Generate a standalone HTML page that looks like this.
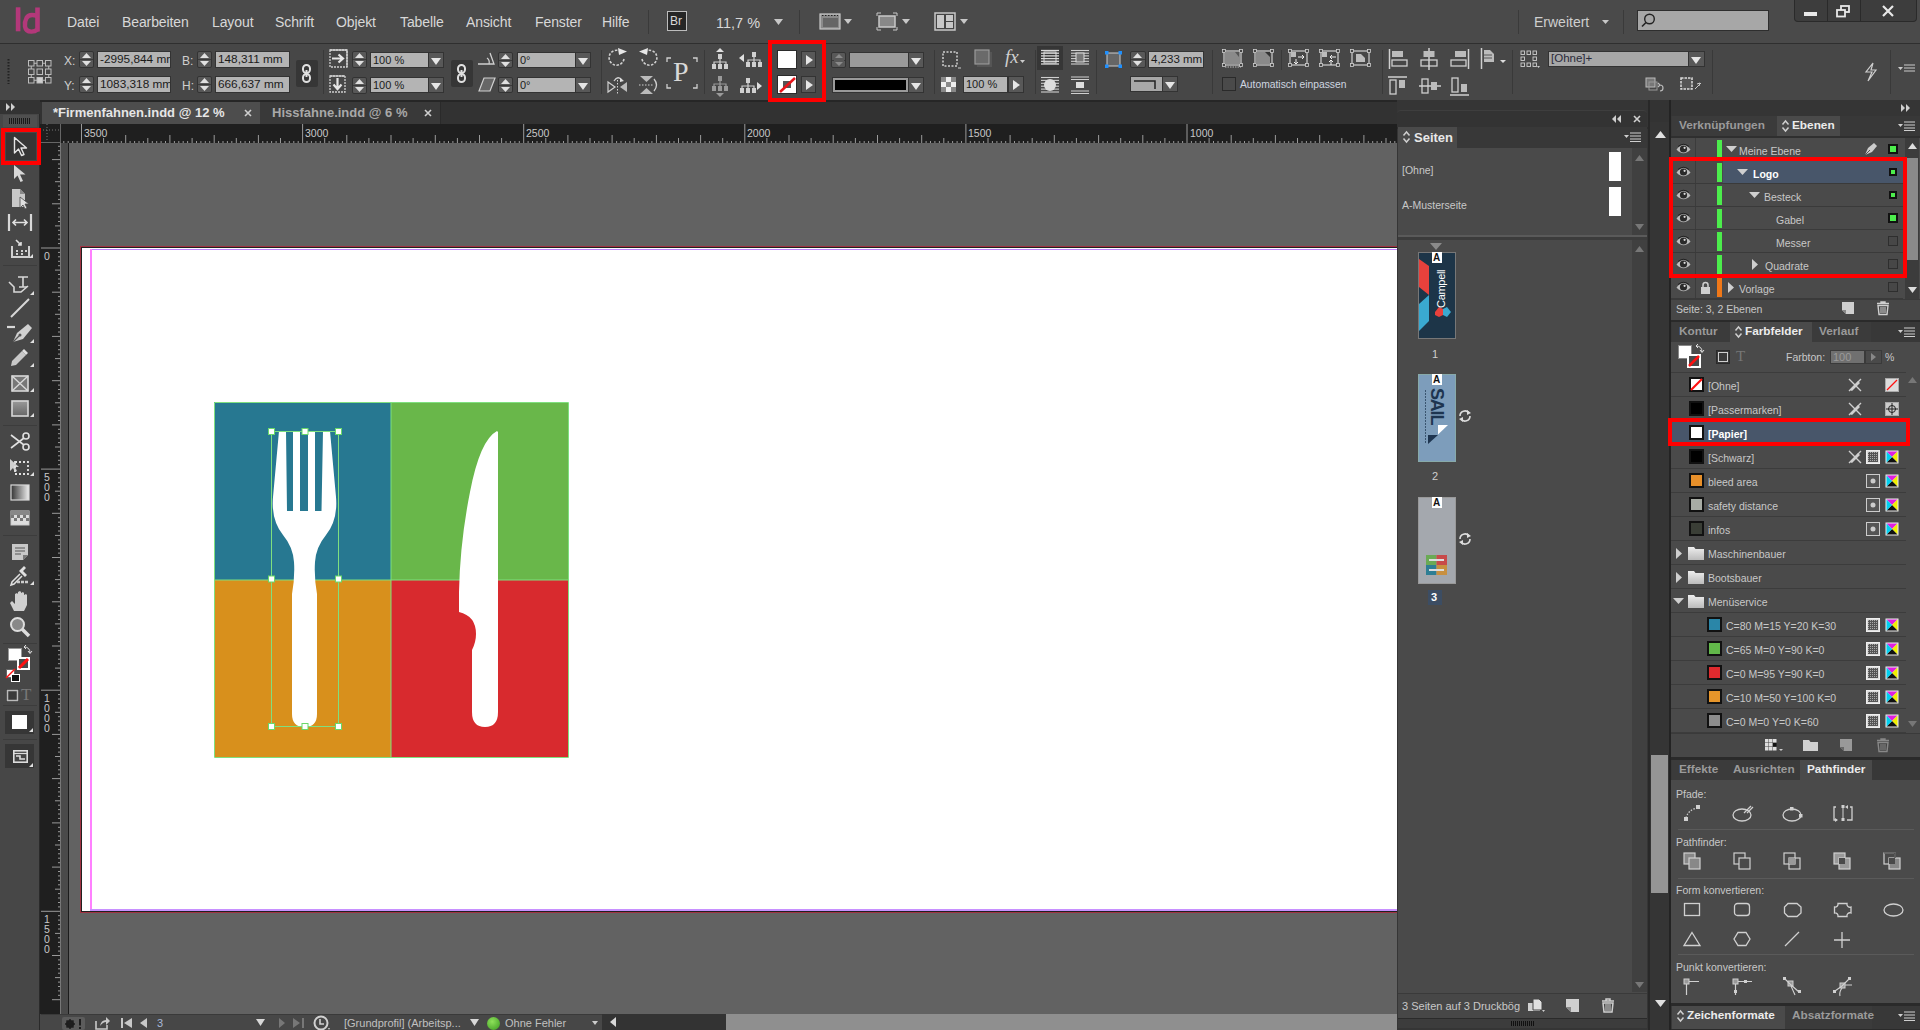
<!DOCTYPE html><html><head><meta charset="utf-8"><style>
*{margin:0;padding:0;box-sizing:border-box}
html,body{width:1920px;height:1030px;overflow:hidden;background:#4a4a4a;font-family:"Liberation Sans",sans-serif;color:#d0d0d0}
.a{position:absolute}
.t{position:absolute;white-space:nowrap;line-height:1}
svg{position:absolute;overflow:visible}
</style></head><body><div class="a" style="left:0px;top:0px;width:1920px;height:43px;background:#4a4a4a"></div><div class="a" style="left:0px;top:43px;width:1920px;height:59px;background:#474747;border-top:1px solid #2f2f2f;border-bottom:2px solid #262626"></div><div class="a" style="left:0px;top:102px;width:1920px;height:22px;background:#323232"></div><div class="a" style="left:0px;top:100px;width:40px;height:930px;background:#474747;border-right:1px solid #2a2a2a"></div><div class="a" style="left:40px;top:124px;width:1357px;height:19px;background:#1f1f1f"></div><div class="a" style="left:40px;top:124px;width:21px;height:890px;background:#1f1f1f"></div><div class="a" style="left:61px;top:143px;width:1336px;height:871px;background:#626262"></div><div class="a" style="left:61px;top:143px;width:7px;height:871px;background:#4a4a4a"></div><div class="a" style="left:68px;top:143px;width:1px;height:871px;background:#1c1c1c"></div><div class="a" style="left:80px;top:246px;width:1317px;height:667px;background:#a03242"></div><div class="a" style="left:81px;top:247px;width:1316px;height:665px;background:#202020"></div><div class="a" style="left:82px;top:248px;width:1315px;height:663px;background:#ffffff"></div><div class="a" style="left:40px;top:1014px;width:1357px;height:16px;background:#474747"></div><div class="a" style="left:726px;top:1014px;width:671px;height:16px;background:#8f8f8f"></div><div class="a" style="left:1397px;top:100px;width:253px;height:930px;background:#383838"></div><div class="a" style="left:1398px;top:127px;width:249px;height:866px;background:#4a4a4a"></div><div class="a" style="left:1650px;top:100px;width:20px;height:930px;background:#333333"></div><div class="a" style="left:1651px;top:755px;width:17px;height:138px;background:#8c8c8c"></div><div class="a" style="left:1670px;top:100px;width:250px;height:930px;background:#3a3a3a"></div><svg style="left:14px;top:6px;" width="28" height="27" viewBox="0 0 28 27"><rect x="1.8" y="1.3" width="4.6" height="24" fill="#b3387a"/><rect x="21.2" y="1.5" width="4.6" height="24" fill="#b3387a"/><path d="M23.5 10.2Q15.5 7 12.5 12Q10.3 16 11 20.5Q12 25.8 17.5 25.6Q21 25.5 23.5 23.5" fill="none" stroke="#b3387a" stroke-width="4.4"/></svg><div class="t" style="left:67px;top:15px;font-size:14px;color:#d8d8d8;letter-spacing:-0.1px">Datei</div><div class="t" style="left:122px;top:15px;font-size:14px;color:#d8d8d8;letter-spacing:-0.1px">Bearbeiten</div><div class="t" style="left:212px;top:15px;font-size:14px;color:#d8d8d8;letter-spacing:-0.1px">Layout</div><div class="t" style="left:275px;top:15px;font-size:14px;color:#d8d8d8;letter-spacing:-0.1px">Schrift</div><div class="t" style="left:336px;top:15px;font-size:14px;color:#d8d8d8;letter-spacing:-0.1px">Objekt</div><div class="t" style="left:400px;top:15px;font-size:14px;color:#d8d8d8;letter-spacing:-0.1px">Tabelle</div><div class="t" style="left:466px;top:15px;font-size:14px;color:#d8d8d8;letter-spacing:-0.1px">Ansicht</div><div class="t" style="left:535px;top:15px;font-size:14px;color:#d8d8d8;letter-spacing:-0.1px">Fenster</div><div class="t" style="left:602px;top:15px;font-size:14px;color:#d8d8d8;letter-spacing:-0.1px">Hilfe</div><div class="a" style="left:648px;top:10px;width:1px;height:24px;background:#3a3a3a"></div><div class="a" style="left:667px;top:11px;width:20px;height:20px;border:1px solid #bdbdbd;background:#262626"></div><div class="t" style="left:670px;top:15px;font-size:12px;color:#d8d8d8;">Br</div><div class="t" style="left:716px;top:16px;font-size:14.5px;color:#d8d8d8;">11,7 %</div><svg style="left:774px;top:19px;" width="9" height="6" viewBox="0 0 9 6"><path d="M0 0H9L4.5 6Z" fill="#c8c8c8"/></svg><div class="a" style="left:799px;top:10px;width:1px;height:24px;background:#3a3a3a"></div><svg style="left:819px;top:12px;" width="22" height="19" viewBox="0 0 22 19"><rect x="1" y="2" width="20" height="15" fill="#8a8a8a" stroke="#c8c8c8" stroke-width="1.2"/><rect x="4" y="6" width="15" height="9" fill="#666"/><path d="M3 3.5h16" stroke="#222" stroke-dasharray="1.5 1.5"/></svg><svg style="left:844px;top:19px;" width="8" height="5" viewBox="0 0 8 5"><path d="M0 0H8L4 5Z" fill="#c8c8c8"/></svg><svg style="left:876px;top:12px;" width="22" height="19" viewBox="0 0 22 19"><rect x="3" y="4" width="16" height="11" fill="#888" stroke="#c8c8c8" stroke-width="1.5"/><path d="M1 4V1H5M17 1H21V4M21 15V18H17M5 18H1V15" stroke="#c8c8c8" fill="none"/></svg><svg style="left:902px;top:19px;" width="8" height="5" viewBox="0 0 8 5"><path d="M0 0H8L4 5Z" fill="#c8c8c8"/></svg><svg style="left:934px;top:12px;" width="22" height="19" viewBox="0 0 22 19"><rect x="1" y="1" width="20" height="17" fill="#444" stroke="#c8c8c8" stroke-width="1.5"/><rect x="3" y="3" width="7" height="13" fill="#c8c8c8"/><rect x="12" y="3" width="7" height="6" fill="#c8c8c8"/><rect x="12" y="10" width="7" height="6" fill="#c8c8c8"/></svg><svg style="left:960px;top:19px;" width="8" height="5" viewBox="0 0 8 5"><path d="M0 0H8L4 5Z" fill="#c8c8c8"/></svg><div class="a" style="left:1518px;top:10px;width:1px;height:24px;background:#3a3a3a"></div><div class="t" style="left:1534px;top:15px;font-size:14px;color:#cfcfcf;">Erweitert</div><svg style="left:1602px;top:20px;" width="7" height="4" viewBox="0 0 7 4"><path d="M0 0H7L3.5 4Z" fill="#c8c8c8"/></svg><div class="a" style="left:1623px;top:10px;width:1px;height:24px;background:#3a3a3a"></div><div class="a" style="left:1637px;top:10px;width:132px;height:21px;background:#a7a7a7;border:1px solid #2e2e2e"></div><svg style="left:1641px;top:13px;" width="14" height="15" viewBox="0 0 14 15"><circle cx="8.5" cy="6" r="4.8" fill="none" stroke="#222" stroke-width="1.4"/><path d="M5 9.5L1 13.5" stroke="#222" stroke-width="1.6"/></svg><div class="a" style="left:1794px;top:0px;width:123px;height:22px;background:#3d3d3d;border-radius:0 0 4px 4px;border:1px solid #2a2a2a;border-top:none"></div><div class="a" style="left:1827px;top:0px;width:1px;height:22px;background:#2a2a2a"></div><div class="a" style="left:1860px;top:0px;width:1px;height:22px;background:#2a2a2a"></div><div class="a" style="left:1804px;top:12px;width:13px;height:4px;background:#e8e8e8"></div><svg style="left:1836px;top:5px;" width="15" height="13" viewBox="0 0 15 13"><rect x="5" y="1" width="8" height="6" fill="none" stroke="#e8e8e8" stroke-width="1.8"/><rect x="1" y="5" width="8" height="6.5" fill="#3d3d3d" stroke="#e8e8e8" stroke-width="1.8"/></svg><svg style="left:1882px;top:5px;" width="12" height="12" viewBox="0 0 12 12"><path d="M1 1L11 11M11 1L1 11" stroke="#e8e8e8" stroke-width="2.2"/></svg><svg style="left:7px;top:59px;" width="3" height="25" viewBox="0 0 3 25"><path d="M1.5 0V25" stroke="#222" stroke-width="2" stroke-dasharray="1.5 1.5"/></svg><svg style="left:27px;top:59px;" width="26" height="26" viewBox="0 0 26 26"><rect x="1.5" y="1.5" width="5.5" height="5.5" fill="none" stroke="#bdbdbd" stroke-width="1"/><rect x="1.5" y="10.0" width="5.5" height="5.5" fill="none" stroke="#bdbdbd" stroke-width="1"/><rect x="1.5" y="18.5" width="5.5" height="5.5" fill="none" stroke="#bdbdbd" stroke-width="1"/><rect x="10.0" y="1.5" width="5.5" height="5.5" fill="none" stroke="#bdbdbd" stroke-width="1"/><rect x="10.0" y="10.0" width="5.5" height="5.5" fill="none" stroke="#bdbdbd" stroke-width="1"/><rect x="10.0" y="18.5" width="5.5" height="5.5" fill="#cfcfcf" stroke="#bdbdbd" stroke-width="1"/><rect x="18.5" y="1.5" width="5.5" height="5.5" fill="none" stroke="#bdbdbd" stroke-width="1"/><rect x="18.5" y="10.0" width="5.5" height="5.5" fill="none" stroke="#bdbdbd" stroke-width="1"/><rect x="18.5" y="18.5" width="5.5" height="5.5" fill="none" stroke="#bdbdbd" stroke-width="1"/><path d="M7 4.25H10M15.5 4.25H18.5M7 21.25H10M15.5 21.25H18.5M4.25 7V10M4.25 15.5V18.5M21.75 7V10M21.75 15.5V18.5" stroke="#bdbdbd"/></svg><div class="t" style="left:64px;top:55px;font-size:12px;color:#cfcfcf;">X:</div><div class="t" style="left:64px;top:80px;font-size:12px;color:#cfcfcf;">Y:</div><div class="a" style="left:79px;top:51px;width:15px;height:17px;background:#585858;border:1px solid #333;border-radius:2px"></div><div class="a" style="left:80px;top:59px;width:13px;height:1px;background:#3a3a3a"></div><svg style="left:82px;top:53px;" width="9" height="13" viewBox="0 0 9 13"><path d="M0 5H9L4.5 0Z" fill="#e0e0e0"/><path d="M0 8H9L4.5 13Z" fill="#e0e0e0"/></svg><div class="a" style="left:97px;top:51px;width:74px;height:17px;background:#b4b4b4;border:1px solid #333;overflow:hidden"><div class="t" style="left:2px;top:2px;font-size:11.8px;color:#1b1b1b">-2995,844 mm</div></div><div class="a" style="left:79px;top:76px;width:15px;height:17px;background:#585858;border:1px solid #333;border-radius:2px"></div><div class="a" style="left:80px;top:84px;width:13px;height:1px;background:#3a3a3a"></div><svg style="left:82px;top:78px;" width="9" height="13" viewBox="0 0 9 13"><path d="M0 5H9L4.5 0Z" fill="#e0e0e0"/><path d="M0 8H9L4.5 13Z" fill="#e0e0e0"/></svg><div class="a" style="left:97px;top:76px;width:74px;height:17px;background:#b4b4b4;border:1px solid #333;overflow:hidden"><div class="t" style="left:2px;top:2px;font-size:11.8px;color:#1b1b1b">1083,318 mm</div></div><div class="t" style="left:182px;top:55px;font-size:12px;color:#cfcfcf;">B:</div><div class="t" style="left:182px;top:80px;font-size:12px;color:#cfcfcf;">H:</div><div class="a" style="left:197px;top:51px;width:15px;height:17px;background:#585858;border:1px solid #333;border-radius:2px"></div><div class="a" style="left:198px;top:59px;width:13px;height:1px;background:#3a3a3a"></div><svg style="left:200px;top:53px;" width="9" height="13" viewBox="0 0 9 13"><path d="M0 5H9L4.5 0Z" fill="#e0e0e0"/><path d="M0 8H9L4.5 13Z" fill="#e0e0e0"/></svg><div class="a" style="left:215px;top:51px;width:75px;height:17px;background:#b4b4b4;border:1px solid #333;overflow:hidden"><div class="t" style="left:2px;top:2px;font-size:11.8px;color:#1b1b1b">148,311 mm</div></div><div class="a" style="left:197px;top:76px;width:15px;height:17px;background:#585858;border:1px solid #333;border-radius:2px"></div><div class="a" style="left:198px;top:84px;width:13px;height:1px;background:#3a3a3a"></div><svg style="left:200px;top:78px;" width="9" height="13" viewBox="0 0 9 13"><path d="M0 5H9L4.5 0Z" fill="#e0e0e0"/><path d="M0 8H9L4.5 13Z" fill="#e0e0e0"/></svg><div class="a" style="left:215px;top:76px;width:75px;height:17px;background:#b4b4b4;border:1px solid #333;overflow:hidden"><div class="t" style="left:2px;top:2px;font-size:11.8px;color:#1b1b1b">666,637 mm</div></div><div class="a" style="left:296px;top:60px;width:22px;height:27px;background:#363636;border-radius:2px"></div><svg style="left:301px;top:64px;" width="12" height="19" viewBox="0 0 12 19"><rect x="2" y="1" width="7" height="8" rx="3.5" fill="none" stroke="#e0e0e0" stroke-width="2"/><rect x="2" y="10" width="7" height="8" rx="3.5" fill="none" stroke="#e0e0e0" stroke-width="2"/><path d="M5.5 6V13" stroke="#e0e0e0" stroke-width="2"/></svg><div class="a" style="left:323px;top:50px;width:1px;height:44px;background:#393939"></div><svg style="left:329px;top:49px;" width="20" height="20" viewBox="0 0 20 20"><rect x="1" y="1" width="17" height="17" fill="none" stroke="#cfcfcf" stroke-width="1.3" stroke-dasharray="2 1"/><path d="M1 1H18V18" fill="none" stroke="#cfcfcf" stroke-width="1.3"/><path d="M3 9.5H13M9.5 5.5L14 9.5L9.5 13.5" stroke="#e6e6e6" stroke-width="2.2" fill="none"/></svg><svg style="left:329px;top:75px;" width="18" height="19" viewBox="0 0 18 19"><rect x="1" y="1" width="15" height="16" fill="none" stroke="#cfcfcf" stroke-width="1.3" stroke-dasharray="2 1"/><path d="M1 1H16" stroke="#cfcfcf" stroke-width="1.3"/><path d="M8.5 3V13M4.5 9.5L8.5 14L12.5 9.5" stroke="#e6e6e6" stroke-width="2.2" fill="none"/></svg><div class="a" style="left:352px;top:51px;width:15px;height:17px;background:#585858;border:1px solid #333;border-radius:2px"></div><div class="a" style="left:353px;top:59px;width:13px;height:1px;background:#3a3a3a"></div><svg style="left:355px;top:53px;" width="9" height="13" viewBox="0 0 9 13"><path d="M0 5H9L4.5 0Z" fill="#e0e0e0"/><path d="M0 8H9L4.5 13Z" fill="#e0e0e0"/></svg><div class="a" style="left:370px;top:52px;width:59px;height:16px;background:#b4b4b4;border:1px solid #333;overflow:hidden"><div class="t" style="left:2px;top:2px;font-size:11px;color:#1b1b1b">100 %</div></div><div class="a" style="left:428px;top:52px;width:16px;height:16px;background:#585858;border:1px solid #333"></div><svg style="left:431px;top:58px;" width="10" height="7" viewBox="0 0 10 7"><path d="M0 0H10L5 7Z" fill="#e6e6e6"/></svg><div class="a" style="left:352px;top:77px;width:15px;height:17px;background:#585858;border:1px solid #333;border-radius:2px"></div><div class="a" style="left:353px;top:85px;width:13px;height:1px;background:#3a3a3a"></div><svg style="left:355px;top:79px;" width="9" height="13" viewBox="0 0 9 13"><path d="M0 5H9L4.5 0Z" fill="#e0e0e0"/><path d="M0 8H9L4.5 13Z" fill="#e0e0e0"/></svg><div class="a" style="left:370px;top:77px;width:59px;height:16px;background:#b4b4b4;border:1px solid #333;overflow:hidden"><div class="t" style="left:2px;top:2px;font-size:11px;color:#1b1b1b">100 %</div></div><div class="a" style="left:428px;top:77px;width:16px;height:16px;background:#585858;border:1px solid #333"></div><svg style="left:431px;top:83px;" width="10" height="7" viewBox="0 0 10 7"><path d="M0 0H10L5 7Z" fill="#e6e6e6"/></svg><div class="a" style="left:451px;top:60px;width:22px;height:27px;background:#363636;border-radius:2px"></div><svg style="left:456px;top:64px;" width="12" height="19" viewBox="0 0 12 19"><rect x="2" y="1" width="7" height="8" rx="3.5" fill="none" stroke="#e0e0e0" stroke-width="2"/><rect x="2" y="10" width="7" height="8" rx="3.5" fill="none" stroke="#e0e0e0" stroke-width="2"/><path d="M5.5 6V13" stroke="#e0e0e0" stroke-width="2"/></svg><svg style="left:477px;top:51px;" width="18" height="14" viewBox="0 0 18 14"><path d="M1 13H17L13 2" fill="none" stroke="#d0d0d0" stroke-width="1.3"/><path d="M10 7Q13 9 12 13" fill="none" stroke="#d0d0d0" stroke-width="1.2"/></svg><svg style="left:478px;top:77px;" width="18" height="15" viewBox="0 0 18 15"><path d="M1 14L6 1H17L12 14Z" fill="#666" stroke="#d0d0d0" stroke-width="1.2"/></svg><div class="a" style="left:498px;top:52px;width:15px;height:16px;background:#585858;border:1px solid #333;border-radius:2px"></div><div class="a" style="left:499px;top:60px;width:13px;height:1px;background:#3a3a3a"></div><svg style="left:501px;top:54px;" width="9" height="13" viewBox="0 0 9 13"><path d="M0 5H9L4.5 0Z" fill="#e0e0e0"/><path d="M0 8H9L4.5 13Z" fill="#e0e0e0"/></svg><div class="a" style="left:517px;top:52px;width:59px;height:16px;background:#b4b4b4;border:1px solid #333;overflow:hidden"><div class="t" style="left:2px;top:2px;font-size:11px;color:#1b1b1b">0°</div></div><div class="a" style="left:575px;top:52px;width:16px;height:16px;background:#585858;border:1px solid #333"></div><svg style="left:578px;top:58px;" width="10" height="7" viewBox="0 0 10 7"><path d="M0 0H10L5 7Z" fill="#e6e6e6"/></svg><div class="a" style="left:498px;top:77px;width:15px;height:16px;background:#585858;border:1px solid #333;border-radius:2px"></div><div class="a" style="left:499px;top:85px;width:13px;height:1px;background:#3a3a3a"></div><svg style="left:501px;top:79px;" width="9" height="13" viewBox="0 0 9 13"><path d="M0 5H9L4.5 0Z" fill="#e0e0e0"/><path d="M0 8H9L4.5 13Z" fill="#e0e0e0"/></svg><div class="a" style="left:517px;top:77px;width:59px;height:16px;background:#b4b4b4;border:1px solid #333;overflow:hidden"><div class="t" style="left:2px;top:2px;font-size:11px;color:#1b1b1b">0°</div></div><div class="a" style="left:575px;top:77px;width:16px;height:16px;background:#585858;border:1px solid #333"></div><svg style="left:578px;top:83px;" width="10" height="7" viewBox="0 0 10 7"><path d="M0 0H10L5 7Z" fill="#e6e6e6"/></svg><div class="a" style="left:601px;top:50px;width:1px;height:44px;background:#393939"></div><svg style="left:607px;top:48px;" width="21" height="19" viewBox="0 0 21 19"><path d="M17 11A7.5 7.5 0 1 1 13 3" fill="none" stroke="#d0d0d0" stroke-width="1.6" stroke-dasharray="2.5 1.5"/><path d="M11 0L20 3.5L12 7Z" fill="#e6e6e6"/></svg><svg style="left:638px;top:48px;" width="21" height="19" viewBox="0 0 21 19"><path d="M4 11A7.5 7.5 0 1 0 8 3" fill="none" stroke="#d0d0d0" stroke-width="1.6" stroke-dasharray="2.5 1.5"/><path d="M10 0L1 3.5L9 7Z" fill="#e6e6e6"/></svg><svg style="left:607px;top:75px;" width="21" height="20" viewBox="0 0 21 20"><path d="M1 7L8 12L1 17Z" fill="none" stroke="#d0d0d0" stroke-width="1.2"/><path d="M20 7L13 12L20 17Z" fill="#bbb"/><path d="M10.5 5V20" stroke="#d0d0d0" stroke-dasharray="1.5 1.5"/><path d="M7 6Q11 0 15 5" fill="none" stroke="#d0d0d0" stroke-width="1.3"/><path d="M13 3L17 6L13 7Z" fill="#e0e0e0"/></svg><svg style="left:638px;top:75px;" width="21" height="20" viewBox="0 0 21 20"><path d="M2 1H15L8.5 7Z" fill="#bbb"/><path d="M2 19H15L8.5 13Z" fill="#bbb"/><path d="M1 10H16" stroke="#d0d0d0" stroke-dasharray="1.5 1.5"/><path d="M16 4Q21 10 16 16" fill="none" stroke="#d0d0d0" stroke-width="1.3"/></svg><svg style="left:666px;top:57px;" width="32" height="32" viewBox="0 0 32 32"><path d="M1 5V1H5M27 1H31V5M31 27V31H27M5 31H1V27" fill="none" stroke="#cfcfcf" stroke-width="1.3"/></svg><div class="t" style="left:673px;top:58px;font-size:28px;color:#d8d8d8;font-family:'Liberation Serif',serif">P</div><div class="a" style="left:704px;top:50px;width:1px;height:44px;background:#393939"></div><svg style="left:710px;top:48px;" width="20" height="22" viewBox="0 0 20 22"><path d="M10 10V14M4 16V14H16V16M10 14V16" stroke="#d0d0d0" stroke-width="1.2" fill="none"/><rect x="8" y="6" width="4" height="5" fill="#d0d0d0"/><rect x="2" y="16" width="4" height="5" fill="#d0d0d0"/><rect x="8" y="16" width="4" height="5" fill="#d0d0d0"/><rect x="14" y="16" width="4" height="5" fill="#d0d0d0"/><path d="M6 4H14L10 0Z" fill="#e0e0e0"/></svg><svg style="left:739px;top:50px;" width="24" height="18" viewBox="0 0 24 18"><path d="M15 6V10M9 12V10H21V12M15 10V12" stroke="#d0d0d0" stroke-width="1.2" fill="none"/><rect x="13" y="2" width="4" height="5" fill="#d0d0d0"/><rect x="7" y="12" width="4" height="5" fill="#d0d0d0"/><rect x="13" y="12" width="4" height="5" fill="#d0d0d0"/><rect x="19" y="12" width="4" height="5" fill="#d0d0d0"/><path d="M0 8L5 4V12Z" fill="#e0e0e0"/></svg><svg style="left:710px;top:76px;" width="20" height="22" viewBox="0 0 20 22"><path d="M10 4V8M4 10V8H16V10M10 8V10" stroke="#9a9a9a" stroke-width="1.2" fill="none"/><rect x="8" y="0" width="4" height="5" fill="#9a9a9a"/><rect x="2" y="10" width="4" height="5" fill="#9a9a9a"/><rect x="8" y="10" width="4" height="5" fill="#9a9a9a"/><rect x="14" y="10" width="4" height="5" fill="#9a9a9a"/><path d="M6 17H14L10 21Z" fill="#9a9a9a"/></svg><svg style="left:739px;top:77px;" width="24" height="18" viewBox="0 0 24 18"><path d="M9 5V9M3 11V9H15V11M9 9V11" stroke="#d0d0d0" stroke-width="1.2" fill="none"/><rect x="7" y="1" width="4" height="5" fill="#d0d0d0"/><rect x="1" y="11" width="4" height="5" fill="#d0d0d0"/><rect x="7" y="11" width="4" height="5" fill="#d0d0d0"/><rect x="13" y="11" width="4" height="5" fill="#d0d0d0"/><path d="M23 9L18 5V13Z" fill="#e0e0e0"/></svg><div class="a" style="left:768px;top:50px;width:1px;height:44px;background:#393939"></div><div class="a" style="left:777px;top:50px;width:20px;height:19px;background:#fff;border:1px solid #2b2b2b"></div><div class="a" style="left:801px;top:51px;width:15px;height:17px;background:#585858;border:1px solid #333"></div><svg style="left:806px;top:55px;" width="7" height="10" viewBox="0 0 7 10"><path d="M0 0V10L7 5Z" fill="#e6e6e6"/></svg><div class="a" style="left:777px;top:75px;width:20px;height:19px;background:#fff;border:1px solid #2b2b2b"></div><div class="a" style="left:783px;top:81px;width:8px;height:7px;background:#555"></div><svg style="left:778px;top:76px;" width="18" height="17" viewBox="0 0 18 17"><path d="M2 16L17 2" stroke="#e8151b" stroke-width="2.5"/></svg><div class="a" style="left:801px;top:76px;width:15px;height:17px;background:#585858;border:1px solid #333"></div><svg style="left:806px;top:80px;" width="7" height="10" viewBox="0 0 7 10"><path d="M0 0V10L7 5Z" fill="#e6e6e6"/></svg><div class="a" style="left:831px;top:52px;width:15px;height:16px;background:#585858;border:1px solid #333;border-radius:2px"></div><div class="a" style="left:832px;top:60px;width:13px;height:1px;background:#3a3a3a"></div><svg style="left:834px;top:54px;" width="9" height="13" viewBox="0 0 9 13"><path d="M0 5H9L4.5 0Z" fill="#e0e0e0"/><path d="M0 8H9L4.5 13Z" fill="#e0e0e0"/></svg><div class="a" style="left:834px;top:53px;width:10px;height:14px;background:#585858"></div><svg style="left:835px;top:54px;" width="8" height="12" viewBox="0 0 8 12"><path d="M0 4H8L4 0Z" fill="#8a8a8a"/><path d="M0 8H8L4 12Z" fill="#8a8a8a"/></svg><div class="a" style="left:849px;top:52px;width:60px;height:16px;background:#9a9a9a;border:1px solid #333"></div><div class="a" style="left:908px;top:52px;width:16px;height:16px;background:#585858;border:1px solid #333"></div><svg style="left:911px;top:58px;" width="10" height="7" viewBox="0 0 10 7"><path d="M0 0H10L5 7Z" fill="#e6e6e6"/></svg><div class="a" style="left:832px;top:77px;width:78px;height:16px;background:#9a9a9a;border:1px solid #333"></div><div class="a" style="left:835px;top:80px;width:71px;height:10px;background:#000"></div><div class="a" style="left:908px;top:77px;width:16px;height:16px;background:#585858;border:1px solid #333"></div><svg style="left:911px;top:83px;" width="10" height="7" viewBox="0 0 10 7"><path d="M0 0H10L5 7Z" fill="#e6e6e6"/></svg><div class="a" style="left:934px;top:50px;width:1px;height:44px;background:#393939"></div><svg style="left:941px;top:50px;" width="20" height="20" viewBox="0 0 20 20"><rect x="2" y="2" width="14" height="14" fill="#444" stroke="#d0d0d0" stroke-width="1.5" stroke-dasharray="2 1.5"/><path d="M17 18H20" stroke="#ccc"/></svg><svg style="left:974px;top:49px;" width="18" height="20" viewBox="0 0 18 20"><rect x="1" y="1" width="14" height="14" fill="#6a6a6a" stroke="#9a9a9a" stroke-width="1.2"/><path d="M3 17H17V3" fill="none" stroke="#555" stroke-width="2"/></svg><div class="t" style="left:1005px;top:47px;font-size:19px;color:#cfcfcf;font-style:italic;font-family:'Liberation Serif',serif">fx</div><svg style="left:1020px;top:60px;" width="5" height="3" viewBox="0 0 5 3"><path d="M0 0H5L2.5 3Z" fill="#ccc"/></svg><svg style="left:941px;top:77px;" width="15" height="15" viewBox="0 0 15 15"><rect x="0" y="0" width="15" height="15" fill="#eee"/><rect x="0" y="0" width="5" height="5" fill="#888"/><rect x="10" y="0" width="5" height="5" fill="#888"/><rect x="5" y="5" width="5" height="5" fill="#888"/><rect x="0" y="10" width="5" height="5" fill="#888"/><rect x="10" y="10" width="5" height="5" fill="#888"/></svg><div class="a" style="left:963px;top:76px;width:45px;height:17px;background:#b4b4b4;border:1px solid #333;overflow:hidden"><div class="t" style="left:2px;top:2px;font-size:11px;color:#1b1b1b">100 %</div></div><div class="a" style="left:1008px;top:76px;width:16px;height:17px;background:#585858;border:1px solid #333"></div><svg style="left:1013px;top:80px;" width="7" height="10" viewBox="0 0 7 10"><path d="M0 0V10L7 5Z" fill="#e6e6e6"/></svg><div class="a" style="left:1035px;top:50px;width:1px;height:44px;background:#393939"></div><div class="a" style="left:1037px;top:46px;width:26px;height:24px;background:#363636"></div><svg style="left:1041px;top:49px;" width="18" height="18" viewBox="0 0 18 18"><path d="M0 1.5H18" stroke="#d8d8d8" stroke-width="1.3"/><path d="M0 4.2H18" stroke="#d8d8d8" stroke-width="1.3"/><path d="M0 6.9H18" stroke="#d8d8d8" stroke-width="1.3"/><path d="M0 9.600000000000001H18" stroke="#d8d8d8" stroke-width="1.3"/><path d="M0 12.3H18" stroke="#d8d8d8" stroke-width="1.3"/><path d="M0 15.0H18" stroke="#d8d8d8" stroke-width="1.3"/><rect x="3" y="3" width="12" height="11" fill="none" stroke="#d8d8d8"/></svg><svg style="left:1071px;top:49px;" width="18" height="18" viewBox="0 0 18 18"><path d="M0 1.5H18" stroke="#cfcfcf" stroke-width="1.1"/><path d="M0 4.2H18" stroke="#cfcfcf" stroke-width="1.1"/><path d="M0 6.9H18" stroke="#cfcfcf" stroke-width="1.1"/><path d="M0 9.600000000000001H18" stroke="#cfcfcf" stroke-width="1.1"/><path d="M0 12.3H18" stroke="#cfcfcf" stroke-width="1.1"/><path d="M0 15.0H18" stroke="#cfcfcf" stroke-width="1.1"/><rect x="5" y="4" width="8" height="9" fill="#777" stroke="#ddd"/></svg><svg style="left:1041px;top:76px;" width="18" height="18" viewBox="0 0 18 18"><path d="M0 1.5H18" stroke="#cfcfcf" stroke-width="1.1"/><path d="M0 4.4H18" stroke="#cfcfcf" stroke-width="1.1"/><path d="M0 7.3H18" stroke="#cfcfcf" stroke-width="1.1"/><path d="M0 10.2H18" stroke="#cfcfcf" stroke-width="1.1"/><path d="M0 13.1H18" stroke="#cfcfcf" stroke-width="1.1"/><path d="M0 16.0H18" stroke="#cfcfcf" stroke-width="1.1"/><circle cx="9" cy="9" r="6" fill="#ddd"/></svg><svg style="left:1071px;top:76px;" width="18" height="18" viewBox="0 0 18 18"><path d="M0 1H18M0 3.5H18M0 15H18M0 17.5H18" stroke="#cfcfcf" stroke-width="1.2"/><rect x="5" y="6" width="8" height="6" fill="#ddd"/></svg><div class="a" style="left:1096px;top:50px;width:1px;height:44px;background:#393939"></div><svg style="left:1104px;top:50px;" width="19" height="19" viewBox="0 0 19 19"><rect x="3" y="3" width="13" height="13" fill="#666" stroke="#ccc"/><rect x="1" y="1" width="3.5" height="3.5" fill="#1e90ff"/><rect x="14.5" y="1" width="3.5" height="3.5" fill="#1e90ff"/><rect x="1" y="14.5" width="3.5" height="3.5" fill="#1e90ff"/><rect x="14.5" y="14.5" width="3.5" height="3.5" fill="#1e90ff"/></svg><div class="a" style="left:1130px;top:51px;width:16px;height:17px;background:#585858;border:1px solid #333;border-radius:2px"></div><div class="a" style="left:1131px;top:59px;width:14px;height:1px;background:#3a3a3a"></div><svg style="left:1133px;top:53px;" width="9" height="13" viewBox="0 0 9 13"><path d="M0 5H9L4.5 0Z" fill="#e0e0e0"/><path d="M0 8H9L4.5 13Z" fill="#e0e0e0"/></svg><div class="a" style="left:1148px;top:51px;width:56px;height:17px;background:#b4b4b4;border:1px solid #333;overflow:hidden"><div class="t" style="left:2px;top:2px;font-size:11.5px;color:#1b1b1b">4,233 mm</div></div><div class="a" style="left:1130px;top:76px;width:33px;height:16px;background:#a8a8a8;border:1px solid #333"></div><svg style="left:1133px;top:79px;" width="25" height="10" viewBox="0 0 25 10"><path d="M1 2H22V10" fill="none" stroke="#222" stroke-width="1.5"/></svg><div class="a" style="left:1162px;top:76px;width:16px;height:16px;background:#585858;border:1px solid #333"></div><svg style="left:1165px;top:82px;" width="10" height="7" viewBox="0 0 10 7"><path d="M0 0H10L5 7Z" fill="#e6e6e6"/></svg><div class="a" style="left:1212px;top:50px;width:1px;height:44px;background:#393939"></div><svg style="left:1222px;top:49px;" width="21" height="18" viewBox="0 0 21 18"><rect x="2" y="2" width="17" height="14" fill="none" stroke="#cfcfcf" stroke-width="1.2"/><rect x="0.5" y="0.5" width="3" height="3" fill="#444" stroke="#cfcfcf" stroke-width="0.8"/><rect x="17.5" y="0.5" width="3" height="3" fill="#444" stroke="#cfcfcf" stroke-width="0.8"/><rect x="0.5" y="14.5" width="3" height="3" fill="#444" stroke="#cfcfcf" stroke-width="0.8"/><rect x="17.5" y="14.5" width="3" height="3" fill="#444" stroke="#cfcfcf" stroke-width="0.8"/><rect x="3" y="3" width="15" height="12" fill="#8a8a8a"/><path d="M13 3H17V8" fill="#555"/><path d="M3 18H19" stroke="#bbb" stroke-dasharray="1.5 1"/></svg><svg style="left:1253px;top:49px;" width="21" height="18" viewBox="0 0 21 18"><rect x="2" y="2" width="17" height="14" fill="none" stroke="#cfcfcf" stroke-width="1.2"/><rect x="0.5" y="0.5" width="3" height="3" fill="#444" stroke="#cfcfcf" stroke-width="0.8"/><rect x="17.5" y="0.5" width="3" height="3" fill="#444" stroke="#cfcfcf" stroke-width="0.8"/><rect x="0.5" y="14.5" width="3" height="3" fill="#444" stroke="#cfcfcf" stroke-width="0.8"/><rect x="17.5" y="14.5" width="3" height="3" fill="#444" stroke="#cfcfcf" stroke-width="0.8"/><rect x="3" y="3" width="14" height="12" fill="#8a8a8a"/><path d="M12 3L17 8V3Z" fill="#333"/></svg><div class="a" style="left:1281px;top:50px;width:1px;height:20px;background:#393939"></div><svg style="left:1288px;top:49px;" width="21" height="18" viewBox="0 0 21 18"><rect x="2" y="2" width="17" height="14" fill="none" stroke="#cfcfcf" stroke-width="1.2"/><rect x="0.5" y="0.5" width="3" height="3" fill="#444" stroke="#cfcfcf" stroke-width="0.8"/><rect x="17.5" y="0.5" width="3" height="3" fill="#444" stroke="#cfcfcf" stroke-width="0.8"/><rect x="0.5" y="14.5" width="3" height="3" fill="#444" stroke="#cfcfcf" stroke-width="0.8"/><rect x="17.5" y="14.5" width="3" height="3" fill="#444" stroke="#cfcfcf" stroke-width="0.8"/><rect x="3" y="3" width="5" height="5" fill="#bbb"/><path d="M10 8H16M14 6L16 8L14 10M8 10V15M6 13L8 15L10 13" stroke="#eee" fill="none"/></svg><svg style="left:1319px;top:49px;" width="21" height="18" viewBox="0 0 21 18"><rect x="2" y="2" width="17" height="14" fill="none" stroke="#cfcfcf" stroke-width="1.2"/><rect x="0.5" y="0.5" width="3" height="3" fill="#444" stroke="#cfcfcf" stroke-width="0.8"/><rect x="17.5" y="0.5" width="3" height="3" fill="#444" stroke="#cfcfcf" stroke-width="0.8"/><rect x="0.5" y="14.5" width="3" height="3" fill="#444" stroke="#cfcfcf" stroke-width="0.8"/><rect x="17.5" y="14.5" width="3" height="3" fill="#444" stroke="#cfcfcf" stroke-width="0.8"/><rect x="3" y="3" width="5" height="5" fill="#bbb"/><path d="M11 8H17M13 6L11 8L13 10M12 11V16M10 13L12 11L14 13" stroke="#eee" fill="none"/></svg><svg style="left:1350px;top:49px;" width="21" height="18" viewBox="0 0 21 18"><rect x="2" y="2" width="17" height="14" fill="none" stroke="#cfcfcf" stroke-width="1.2"/><rect x="0.5" y="0.5" width="3" height="3" fill="#444" stroke="#cfcfcf" stroke-width="0.8"/><rect x="17.5" y="0.5" width="3" height="3" fill="#444" stroke="#cfcfcf" stroke-width="0.8"/><rect x="0.5" y="14.5" width="3" height="3" fill="#444" stroke="#cfcfcf" stroke-width="0.8"/><rect x="17.5" y="14.5" width="3" height="3" fill="#444" stroke="#cfcfcf" stroke-width="0.8"/><rect x="6" y="5" width="9" height="8" fill="#bbb"/><path d="M11 5L15 9V5Z" fill="#444"/></svg><div class="a" style="left:1222px;top:77px;width:14px;height:14px;background:#4a4a4a;border:1px solid #2a2a2a"></div><div class="t" style="left:1240px;top:80px;font-size:10.3px;color:#cfd6e0;">Automatisch einpassen</div><div class="a" style="left:1382px;top:50px;width:1px;height:44px;background:#393939"></div><svg style="left:1388px;top:48px;" width="20" height="22" viewBox="0 0 20 22"><path d="M1.5 1V21" stroke="#cfcfcf" stroke-width="1.5"/><rect x="4" y="3" width="11" height="6" fill="#bbb"/><rect x="4" y="12" width="15" height="6" fill="none" stroke="#cfcfcf" stroke-width="1.3"/></svg><svg style="left:1419px;top:48px;" width="20" height="22" viewBox="0 0 20 22"><path d="M10 0V22" stroke="#cfcfcf" stroke-width="1.5"/><rect x="4.5" y="3" width="11" height="6" fill="#bbb"/><rect x="2" y="12" width="16" height="6" fill="none" stroke="#cfcfcf" stroke-width="1.3"/></svg><svg style="left:1450px;top:48px;" width="20" height="22" viewBox="0 0 20 22"><path d="M18.5 1V21" stroke="#cfcfcf" stroke-width="1.5"/><rect x="5" y="3" width="11" height="6" fill="#bbb"/><rect x="1" y="12" width="15" height="6" fill="none" stroke="#cfcfcf" stroke-width="1.3"/></svg><svg style="left:1480px;top:47px;" width="26" height="23" viewBox="0 0 26 23"><path d="M1.5 1V22" stroke="#cfcfcf" stroke-width="1.5"/><path d="M4 3H10L14 7V15H4Z" fill="#bbb"/><path d="M4 8H12M4 11H12" stroke="#555"/><path d="M20 13H26L23 16Z" fill="#ddd"/></svg><svg style="left:1388px;top:76px;" width="20" height="20" viewBox="0 0 20 20"><path d="M0 1H19" stroke="#cfcfcf" stroke-width="1.5"/><rect x="2" y="4" width="6" height="14" fill="none" stroke="#cfcfcf" stroke-width="1.3"/><rect x="11" y="4" width="6" height="8" fill="#bbb"/></svg><svg style="left:1419px;top:76px;" width="22" height="20" viewBox="0 0 22 20"><path d="M0 10H22" stroke="#cfcfcf" stroke-width="1.5"/><rect x="3" y="3" width="6" height="14" fill="none" stroke="#cfcfcf" stroke-width="1.3"/><rect x="12" y="6" width="6" height="8" fill="#bbb"/></svg><svg style="left:1450px;top:76px;" width="20" height="20" viewBox="0 0 20 20"><path d="M0 19H19" stroke="#cfcfcf" stroke-width="1.5"/><rect x="2" y="2" width="6" height="14" fill="none" stroke="#cfcfcf" stroke-width="1.3"/><rect x="11" y="8" width="6" height="8" fill="#bbb"/></svg><div class="a" style="left:1512px;top:50px;width:1px;height:44px;background:#393939"></div><svg style="left:1520px;top:50px;" width="20" height="18" viewBox="0 0 20 18"><rect x="1" y="1" width="3.5" height="3.5" fill="none" stroke="#cfcfcf" stroke-width="0.9"/><rect x="1" y="7" width="3.5" height="3.5" fill="none" stroke="#cfcfcf" stroke-width="0.9"/><rect x="1" y="13" width="3.5" height="3.5" fill="none" stroke="#cfcfcf" stroke-width="0.9"/><rect x="7" y="1" width="3.5" height="3.5" fill="none" stroke="#cfcfcf" stroke-width="0.9"/><rect x="7" y="13" width="3.5" height="3.5" fill="none" stroke="#cfcfcf" stroke-width="0.9"/><rect x="13" y="1" width="3.5" height="3.5" fill="none" stroke="#cfcfcf" stroke-width="0.9"/><rect x="13" y="7" width="3.5" height="3.5" fill="none" stroke="#cfcfcf" stroke-width="0.9"/><rect x="13" y="13" width="3.5" height="3.5" fill="none" stroke="#cfcfcf" stroke-width="0.9"/><path d="M17 16H20L18.5 18Z" fill="#ccc"/></svg><div class="a" style="left:1548px;top:51px;width:141px;height:16px;background:#a7a7a7;border:1px solid #333"></div><div class="t" style="left:1551px;top:53px;font-size:11.5px;color:#2a2a3a;">[Ohne]+</div><div class="a" style="left:1688px;top:51px;width:17px;height:16px;background:#585858;border:1px solid #333"></div><svg style="left:1691px;top:57px;" width="10" height="7" viewBox="0 0 10 7"><path d="M0 0H10L5 7Z" fill="#e6e6e6"/></svg><svg style="left:1645px;top:77px;" width="22" height="17" viewBox="0 0 22 17"><rect x="1" y="1" width="9" height="9" fill="#777" stroke="#bbb"/><rect x="4" y="5" width="8" height="8" fill="none" stroke="#999"/><path d="M15 8A3 3 0 1 1 15 14M13 6L15 8L13 10" fill="none" stroke="#bbb" stroke-width="1.2"/></svg><svg style="left:1680px;top:77px;" width="22" height="17" viewBox="0 0 22 17"><rect x="1" y="1" width="11" height="11" fill="#555" stroke="#ddd" stroke-width="1.5" stroke-dasharray="2.5 1"/><path d="M15 12L21 6M17 7L20 6L19 9" stroke="#ccc" fill="none"/></svg><div class="a" style="left:1712px;top:50px;width:1px;height:44px;background:#393939"></div><svg style="left:1864px;top:63px;" width="14" height="18" viewBox="0 0 14 18"><path d="M9 0L2 9H8L4 18L12 7H7Z" fill="none" stroke="#cfcfcf" stroke-width="1.2"/></svg><div class="a" style="left:1890px;top:50px;width:1px;height:44px;background:#393939"></div><svg style="left:1898px;top:64px;" width="17" height="9" viewBox="0 0 17 9"><path d="M0 3H5L2.5 6Z" fill="#ccc"/><path d="M6 1H17M6 4H17M6 7H17" stroke="#ccc" stroke-width="1.2"/></svg><div class="a" style="left:42px;top:102px;width:218px;height:22px;background:#4d4d4d"></div><div class="t" style="left:53px;top:106px;font-size:13px;color:#e6e6e6;font-weight:bold">*Firmenfahnen.indd @ 12 %</div><svg style="left:244px;top:109px;" width="8" height="8" viewBox="0 0 8 8"><path d="M1 1L7 7M7 1L1 7" stroke="#cfcfcf" stroke-width="1.6"/></svg><div class="a" style="left:260px;top:102px;width:181px;height:22px;background:#393939;border-right:1px solid #2a2a2a"></div><div class="t" style="left:272px;top:106px;font-size:13px;color:#a8a8a8;font-weight:bold">Hissfahne.indd @ 6 %</div><svg style="left:424px;top:109px;" width="8" height="8" viewBox="0 0 8 8"><path d="M1 1L7 7M7 1L1 7" stroke="#cfcfcf" stroke-width="1.6"/></svg><svg style="left:61px;top:124px;" width="1336" height="19" viewBox="0 0 1336 19"><rect x="0" y="0" width="1336" height="19" fill="#1f1f1f"/><path d="M63.8 17V19 M68.2 17V19 M72.7 17V19 M77.1 17V19 M81.5 0V19 M85.9 17V19 M90.3 17V19 M94.8 17V19 M99.2 17V19 M103.6 14V19 M108.0 17V19 M112.5 17V19 M116.9 17V19 M121.3 17V19 M125.7 11V19 M130.1 17V19 M134.6 17V19 M139.0 17V19 M143.4 17V19 M147.8 14V19 M152.3 17V19 M156.7 17V19 M161.1 17V19 M165.5 17V19 M169.9 11V19 M174.4 17V19 M178.8 17V19 M183.2 17V19 M187.6 17V19 M192.1 14V19 M196.5 17V19 M200.9 17V19 M205.3 17V19 M209.7 17V19 M214.2 11V19 M218.6 17V19 M223.0 17V19 M227.4 17V19 M231.8 17V19 M236.3 14V19 M240.7 17V19 M245.1 17V19 M249.5 17V19 M254.0 17V19 M258.4 11V19 M262.8 17V19 M267.2 17V19 M271.6 17V19 M276.1 17V19 M280.5 14V19 M284.9 17V19 M289.3 17V19 M293.8 17V19 M298.2 17V19 M302.6 0V19 M307.0 17V19 M311.4 17V19 M315.9 17V19 M320.3 17V19 M324.7 14V19 M329.1 17V19 M333.6 17V19 M338.0 17V19 M342.4 17V19 M346.8 11V19 M351.2 17V19 M355.7 17V19 M360.1 17V19 M364.5 17V19 M368.9 14V19 M373.4 17V19 M377.8 17V19 M382.2 17V19 M386.6 17V19 M391.0 11V19 M395.5 17V19 M399.9 17V19 M404.3 17V19 M408.7 17V19 M413.1 14V19 M417.6 17V19 M422.0 17V19 M426.4 17V19 M430.8 17V19 M435.3 11V19 M439.7 17V19 M444.1 17V19 M448.5 17V19 M452.9 17V19 M457.4 14V19 M461.8 17V19 M466.2 17V19 M470.6 17V19 M475.1 17V19 M479.5 11V19 M483.9 17V19 M488.3 17V19 M492.7 17V19 M497.2 17V19 M501.6 14V19 M506.0 17V19 M510.4 17V19 M514.9 17V19 M519.3 17V19 M523.7 0V19 M528.1 17V19 M532.5 17V19 M537.0 17V19 M541.4 17V19 M545.8 14V19 M550.2 17V19 M554.7 17V19 M559.1 17V19 M563.5 17V19 M567.9 11V19 M572.3 17V19 M576.8 17V19 M581.2 17V19 M585.6 17V19 M590.0 14V19 M594.5 17V19 M598.9 17V19 M603.3 17V19 M607.7 17V19 M612.1 11V19 M616.6 17V19 M621.0 17V19 M625.4 17V19 M629.8 17V19 M634.2 14V19 M638.7 17V19 M643.1 17V19 M647.5 17V19 M651.9 17V19 M656.4 11V19 M660.8 17V19 M665.2 17V19 M669.6 17V19 M674.0 17V19 M678.5 14V19 M682.9 17V19 M687.3 17V19 M691.7 17V19 M696.2 17V19 M700.6 11V19 M705.0 17V19 M709.4 17V19 M713.8 17V19 M718.3 17V19 M722.7 14V19 M727.1 17V19 M731.5 17V19 M736.0 17V19 M740.4 17V19 M744.8 0V19 M749.2 17V19 M753.6 17V19 M758.1 17V19 M762.5 17V19 M766.9 14V19 M771.3 17V19 M775.8 17V19 M780.2 17V19 M784.6 17V19 M789.0 11V19 M793.4 17V19 M797.9 17V19 M802.3 17V19 M806.7 17V19 M811.1 14V19 M815.6 17V19 M820.0 17V19 M824.4 17V19 M828.8 17V19 M833.2 11V19 M837.7 17V19 M842.1 17V19 M846.5 17V19 M850.9 17V19 M855.4 14V19 M859.8 17V19 M864.2 17V19 M868.6 17V19 M873.0 17V19 M877.5 11V19 M881.9 17V19 M886.3 17V19 M890.7 17V19 M895.1 17V19 M899.6 14V19 M904.0 17V19 M908.4 17V19 M912.8 17V19 M917.3 17V19 M921.7 11V19 M926.1 17V19 M930.5 17V19 M934.9 17V19 M939.4 17V19 M943.8 14V19 M948.2 17V19 M952.6 17V19 M957.1 17V19 M961.5 17V19 M965.9 0V19 M970.3 17V19 M974.7 17V19 M979.2 17V19 M983.6 17V19 M988.0 14V19 M992.4 17V19 M996.9 17V19 M1001.3 17V19 M1005.7 17V19 M1010.1 11V19 M1014.5 17V19 M1019.0 17V19 M1023.4 17V19 M1027.8 17V19 M1032.2 14V19 M1036.7 17V19 M1041.1 17V19 M1045.5 17V19 M1049.9 17V19 M1054.3 11V19 M1058.8 17V19 M1063.2 17V19 M1067.6 17V19 M1072.0 17V19 M1076.4 14V19 M1080.9 17V19 M1085.3 17V19 M1089.7 17V19 M1094.1 17V19 M1098.6 11V19 M1103.0 17V19 M1107.4 17V19 M1111.8 17V19 M1116.2 17V19 M1120.7 14V19 M1125.1 17V19 M1129.5 17V19 M1133.9 17V19 M1138.4 17V19 M1142.8 11V19 M1147.2 17V19 M1151.6 17V19 M1156.0 17V19 M1160.5 17V19 M1164.9 14V19 M1169.3 17V19 M1173.7 17V19 M1178.2 17V19 M1182.6 17V19 M1187.0 0V19 M1191.4 17V19 M1195.8 17V19 M1200.3 17V19 M1204.7 17V19 M1209.1 14V19 M1213.5 17V19 M1218.0 17V19 M1222.4 17V19 M1226.8 17V19 M1231.2 11V19 M1235.6 17V19 M1240.1 17V19 M1244.5 17V19 M1248.9 17V19 M1253.3 14V19 M1257.8 17V19 M1262.2 17V19 M1266.6 17V19 M1271.0 17V19 M1275.4 11V19 M1279.9 17V19 M1284.3 17V19 M1288.7 17V19 M1293.1 17V19 M1297.5 14V19 M1302.0 17V19 M1306.4 17V19 M1310.8 17V19 M1315.2 17V19 M1319.7 11V19 M1324.1 17V19 M1328.5 17V19 M1332.9 17V19 M1337.3 17V19 M1341.8 14V19 M1346.2 17V19 M1350.6 17V19 M1355.0 17V19 M1359.5 17V19 M1363.9 11V19 M1368.3 17V19 M1372.7 17V19 M1377.1 17V19 M1381.6 17V19 M1386.0 14V19 M1390.4 17V19 M1394.8 17V19" stroke="#9a9a9a" stroke-width="1" transform="translate(-61,0)"/></svg><div class="t" style="left:84px;top:128px;font-size:10.5px;color:#c8c8c8;">3500</div><div class="t" style="left:305px;top:128px;font-size:10.5px;color:#c8c8c8;">3000</div><div class="t" style="left:526px;top:128px;font-size:10.5px;color:#c8c8c8;">2500</div><div class="t" style="left:747px;top:128px;font-size:10.5px;color:#c8c8c8;">2000</div><div class="t" style="left:968px;top:128px;font-size:10.5px;color:#c8c8c8;">1500</div><div class="t" style="left:1190px;top:128px;font-size:10.5px;color:#c8c8c8;">1000</div><svg style="left:40px;top:143px;" width="21" height="871" viewBox="0 0 21 871"><rect width="21" height="871" fill="#1f1f1f"/><path d="M18 3.3H20 M18 7.7H20 M18 12.1H20 M12 16.6H20 M18 21.0H20 M18 25.4H20 M18 29.8H20 M18 34.2H20 M15 38.7H20 M18 43.1H20 M18 47.5H20 M18 51.9H20 M18 56.4H20 M12 60.8H20 M18 65.2H20 M18 69.6H20 M18 74.0H20 M18 78.5H20 M15 82.9H20 M18 87.3H20 M18 91.7H20 M18 96.2H20 M18 100.6H20 M1 105.0H20 M18 109.4H20 M18 113.8H20 M18 118.3H20 M18 122.7H20 M15 127.1H20 M18 131.5H20 M18 136.0H20 M18 140.4H20 M18 144.8H20 M12 149.2H20 M18 153.6H20 M18 158.1H20 M18 162.5H20 M18 166.9H20 M15 171.3H20 M18 175.8H20 M18 180.2H20 M18 184.6H20 M18 189.0H20 M12 193.4H20 M18 197.9H20 M18 202.3H20 M18 206.7H20 M18 211.1H20 M15 215.6H20 M18 220.0H20 M18 224.4H20 M18 228.8H20 M18 233.2H20 M12 237.7H20 M18 242.1H20 M18 246.5H20 M18 250.9H20 M18 255.3H20 M15 259.8H20 M18 264.2H20 M18 268.6H20 M18 273.0H20 M18 277.5H20 M12 281.9H20 M18 286.3H20 M18 290.7H20 M18 295.1H20 M18 299.6H20 M15 304.0H20 M18 308.4H20 M18 312.8H20 M18 317.3H20 M18 321.7H20 M1 326.1H20 M18 330.5H20 M18 334.9H20 M18 339.4H20 M18 343.8H20 M15 348.2H20 M18 352.6H20 M18 357.1H20 M18 361.5H20 M18 365.9H20 M12 370.3H20 M18 374.7H20 M18 379.2H20 M18 383.6H20 M18 388.0H20 M15 392.4H20 M18 396.9H20 M18 401.3H20 M18 405.7H20 M18 410.1H20 M12 414.5H20 M18 419.0H20 M18 423.4H20 M18 427.8H20 M18 432.2H20 M15 436.6H20 M18 441.1H20 M18 445.5H20 M18 449.9H20 M18 454.3H20 M12 458.8H20 M18 463.2H20 M18 467.6H20 M18 472.0H20 M18 476.4H20 M15 480.9H20 M18 485.3H20 M18 489.7H20 M18 494.1H20 M18 498.6H20 M12 503.0H20 M18 507.4H20 M18 511.8H20 M18 516.2H20 M18 520.7H20 M15 525.1H20 M18 529.5H20 M18 533.9H20 M18 538.4H20 M18 542.8H20 M1 547.2H20 M18 551.6H20 M18 556.0H20 M18 560.5H20 M18 564.9H20 M15 569.3H20 M18 573.7H20 M18 578.2H20 M18 582.6H20 M18 587.0H20 M12 591.4H20 M18 595.8H20 M18 600.3H20 M18 604.7H20 M18 609.1H20 M15 613.5H20 M18 618.0H20 M18 622.4H20 M18 626.8H20 M18 631.2H20 M12 635.6H20 M18 640.1H20 M18 644.5H20 M18 648.9H20 M18 653.3H20 M15 657.8H20 M18 662.2H20 M18 666.6H20 M18 671.0H20 M18 675.4H20 M12 679.9H20 M18 684.3H20 M18 688.7H20 M18 693.1H20 M18 697.5H20 M15 702.0H20 M18 706.4H20 M18 710.8H20 M18 715.2H20 M18 719.7H20 M12 724.1H20 M18 728.5H20 M18 732.9H20 M18 737.3H20 M18 741.8H20 M15 746.2H20 M18 750.6H20 M18 755.0H20 M18 759.5H20 M18 763.9H20 M1 768.3H20 M18 772.7H20 M18 777.1H20 M18 781.6H20 M18 786.0H20 M15 790.4H20 M18 794.8H20 M18 799.3H20 M18 803.7H20 M18 808.1H20 M12 812.5H20 M18 816.9H20 M18 821.4H20 M18 825.8H20 M18 830.2H20 M15 834.6H20 M18 839.1H20 M18 843.5H20 M18 847.9H20 M18 852.3H20 M12 856.7H20" stroke="#9a9a9a" stroke-width="1"/><path d="M20.5 0V871" stroke="#777"/></svg><div class="t" style="left:44px;top:251px;font-size:10.5px;color:#c8c8c8;">0</div><div class="t" style="left:44px;top:472px;font-size:10.5px;color:#c8c8c8;">5</div><div class="t" style="left:44px;top:482px;font-size:10.5px;color:#c8c8c8;">0</div><div class="t" style="left:44px;top:492px;font-size:10.5px;color:#c8c8c8;">0</div><div class="t" style="left:44px;top:693px;font-size:10.5px;color:#c8c8c8;">1</div><div class="t" style="left:44px;top:703px;font-size:10.5px;color:#c8c8c8;">0</div><div class="t" style="left:44px;top:713px;font-size:10.5px;color:#c8c8c8;">0</div><div class="t" style="left:44px;top:723px;font-size:10.5px;color:#c8c8c8;">0</div><div class="t" style="left:44px;top:914px;font-size:10.5px;color:#c8c8c8;">1</div><div class="t" style="left:44px;top:924px;font-size:10.5px;color:#c8c8c8;">5</div><div class="t" style="left:44px;top:934px;font-size:10.5px;color:#c8c8c8;">0</div><div class="t" style="left:44px;top:944px;font-size:10.5px;color:#c8c8c8;">0</div><div class="a" style="left:40px;top:124px;width:21px;height:19px;background:#1f1f1f"></div><svg style="left:40px;top:124px;" width="21" height="19" viewBox="0 0 21 19"><path d="M0 6H20M7 0V19" stroke="#777" stroke-dasharray="1 2"/><path d="M20.5 0V19M0 18.5H21" stroke="#666"/></svg><div class="a" style="left:0px;top:100px;width:40px;height:14px;background:#333"></div><svg style="left:6px;top:103px;" width="10" height="8" viewBox="0 0 10 8"><path d="M0 0L4 4L0 8ZM5 0L9 4L5 8Z" fill="#cfcfcf"/></svg><div class="a" style="left:3px;top:115px;width:34px;height:12px;background:#4f4f4f"></div><svg style="left:9px;top:118px;" width="22" height="6" viewBox="0 0 22 6"><path d="M0.5 0V6" stroke="#1a1a1a" stroke-width="1"/><path d="M2.5 0V6" stroke="#1a1a1a" stroke-width="1"/><path d="M4.5 0V6" stroke="#1a1a1a" stroke-width="1"/><path d="M6.5 0V6" stroke="#1a1a1a" stroke-width="1"/><path d="M8.5 0V6" stroke="#1a1a1a" stroke-width="1"/><path d="M10.5 0V6" stroke="#1a1a1a" stroke-width="1"/><path d="M12.5 0V6" stroke="#1a1a1a" stroke-width="1"/><path d="M14.5 0V6" stroke="#1a1a1a" stroke-width="1"/><path d="M16.5 0V6" stroke="#1a1a1a" stroke-width="1"/><path d="M18.5 0V6" stroke="#1a1a1a" stroke-width="1"/><path d="M20.5 0V6" stroke="#1a1a1a" stroke-width="1"/></svg><div class="a" style="left:6px;top:133px;width:30px;height:27px;background:#363636"></div><svg style="left:13px;top:136px;" width="15" height="21" viewBox="0 0 15 21"><path d="M1.5 1.5V17L5.5 13L8.5 19.5L11 18.5L8 12H13.5Z" fill="#363636" stroke="#e6e6e6" stroke-width="1.4" stroke-linejoin="round"/></svg><svg style="left:13px;top:164px;" width="14" height="19" viewBox="0 0 14 19"><path d="M1 1V15L4.5 11.5L7.5 18L10 17L7 10.5H12.5Z" fill="#d8d8d8"/></svg><svg style="left:11px;top:188px;" width="18" height="21" viewBox="0 0 18 21"><path d="M1 1H9L14 6V19H1Z" fill="#c8c8c8"/><path d="M9 1V6H14" fill="#888"/><path d="M9 9V20L12 17L14 21L16 20L14 16H18Z" fill="#e0e0e0" stroke="#474747" stroke-width="0.8"/></svg><svg style="left:7px;top:213px;" width="26" height="19" viewBox="0 0 26 19"><path d="M2 1V18M24 1V18" stroke="#d8d8d8" stroke-width="2.2"/><path d="M6 9.5H20M9 6.5L6 9.5L9 12.5M17 6.5L20 9.5L17 12.5" stroke="#e0e0e0" stroke-width="1.6" fill="none"/></svg><svg style="left:10px;top:239px;" width="22" height="20" viewBox="0 0 22 20"><path d="M2 7V18H19V7" fill="none" stroke="#d0d0d0" stroke-width="2"/><path d="M6 12h2M11 12h2M6 15h2M11 15h2M15 12h2" stroke="#d0d0d0" stroke-width="2"/><path d="M6 1L11 6M11 3V6H8" stroke="#e0e0e0" stroke-width="1.6" fill="none"/></svg><svg style="left:29px;top:254px;" width="4" height="4" viewBox="0 0 4 4"><path d="M4 0V4H0Z" fill="#e0e0e0"/></svg><div class="a" style="left:3px;top:265px;width:34px;height:1px;background:#3c3c3c"></div><svg style="left:8px;top:274px;" width="25" height="20" viewBox="0 0 25 20"><path d="M1 8L6 13V18H13L20 12" fill="none" stroke="#d8d8d8" stroke-width="1.6"/><path d="M10 3H20M15 3V13M11 13H19" stroke="#d8d8d8" stroke-width="1.6"/></svg><svg style="left:30px;top:291px;" width="4" height="4" viewBox="0 0 4 4"><path d="M4 0V4H0Z" fill="#e0e0e0"/></svg><svg style="left:10px;top:298px;" width="20" height="20" viewBox="0 0 20 20"><path d="M1 19L19 1" stroke="#d8d8d8" stroke-width="2"/></svg><svg style="left:6px;top:322px;" width="28" height="22" viewBox="0 0 28 22"><path d="M1 5H9" stroke="#d8d8d8" stroke-width="2.2"/><path d="M11 11L22 2L26 6L17 17L7 20Z" fill="#d0d0d0"/><path d="M7 20L14 13" stroke="#555" stroke-width="1.2"/><circle cx="14" cy="13" r="1.5" fill="#555"/></svg><svg style="left:30px;top:339px;" width="4" height="4" viewBox="0 0 4 4"><path d="M4 0V4H0Z" fill="#e0e0e0"/></svg><svg style="left:9px;top:348px;" width="20" height="20" viewBox="0 0 20 20"><path d="M3 13L13 3L17 7L7 17L2 18Z" fill="#c8c8c8"/><path d="M13 3L15 1L19 5L17 7Z" fill="#e0e0e0"/></svg><svg style="left:30px;top:363px;" width="4" height="4" viewBox="0 0 4 4"><path d="M4 0V4H0Z" fill="#e0e0e0"/></svg><svg style="left:11px;top:375px;" width="18" height="17" viewBox="0 0 18 17"><rect x="1" y="1" width="16" height="15" fill="#777" stroke="#d8d8d8" stroke-width="1.6"/><path d="M1 1L17 16M17 1L1 16" stroke="#d8d8d8" stroke-width="1.4"/></svg><svg style="left:30px;top:388px;" width="4" height="4" viewBox="0 0 4 4"><path d="M4 0V4H0Z" fill="#e0e0e0"/></svg><svg style="left:11px;top:400px;" width="18" height="17" viewBox="0 0 18 17"><defs><linearGradient id="g1" x1="0" y1="0" x2="0" y2="1"><stop offset="0" stop-color="#9a9a9a"/><stop offset="1" stop-color="#666"/></linearGradient></defs><rect x="1" y="1" width="16" height="15" fill="url(#g1)" stroke="#d8d8d8" stroke-width="1.6"/></svg><svg style="left:30px;top:413px;" width="4" height="4" viewBox="0 0 4 4"><path d="M4 0V4H0Z" fill="#e0e0e0"/></svg><div class="a" style="left:3px;top:425px;width:34px;height:1px;background:#3c3c3c"></div><svg style="left:10px;top:432px;" width="21" height="19" viewBox="0 0 21 19"><circle cx="16" cy="4" r="3" fill="none" stroke="#e0e0e0" stroke-width="1.6"/><circle cx="16" cy="15" r="3" fill="none" stroke="#e0e0e0" stroke-width="1.6"/><path d="M1 3L14 13M1 16L14 6" stroke="#e0e0e0" stroke-width="1.6"/></svg><svg style="left:9px;top:458px;" width="22" height="18" viewBox="0 0 22 18"><path d="M1 1V13L4 10L6 14L8 13L6 9H10Z" fill="#d0d0d0"/><rect x="6" y="4" width="13" height="12" fill="none" stroke="#e0e0e0" stroke-width="1.8" stroke-dasharray="2 2"/></svg><svg style="left:30px;top:472px;" width="4" height="4" viewBox="0 0 4 4"><path d="M4 0V4H0Z" fill="#e0e0e0"/></svg><svg style="left:10px;top:484px;" width="20" height="17" viewBox="0 0 20 17"><defs><linearGradient id="g2" x1="0" y1="0" x2="1" y2="0"><stop offset="0" stop-color="#333"/><stop offset="1" stop-color="#eee"/></linearGradient></defs><rect x="1" y="1" width="18" height="15" fill="url(#g2)" stroke="#d8d8d8" stroke-width="1.2"/></svg><svg style="left:10px;top:510px;" width="20" height="16" viewBox="0 0 20 16"><rect x="1" y="1" width="18" height="14" fill="#ddd" stroke="#ccc"/><rect x="1" y="5" width="3" height="3" fill="#777"/><rect x="4" y="8" width="3" height="3" fill="#777"/><rect x="7" y="5" width="3" height="3" fill="#777"/><rect x="10" y="8" width="3" height="3" fill="#777"/><rect x="13" y="5" width="3" height="3" fill="#777"/><rect x="16" y="8" width="3" height="3" fill="#777"/><rect x="1" y="1" width="18" height="4" fill="#888"/></svg><div class="a" style="left:3px;top:535px;width:34px;height:1px;background:#3c3c3c"></div><svg style="left:11px;top:543px;" width="18" height="18" viewBox="0 0 18 18"><path d="M1 1H17V12L12 17H1Z" fill="#c8c8c8"/><path d="M17 12H12V17" fill="#777"/><path d="M4 5H14M4 8H14M4 11H10" stroke="#555" stroke-width="1.2"/></svg><svg style="left:8px;top:566px;" width="24" height="20" viewBox="0 0 24 20"><path d="M12 8L4 16L3 19L6 18L14 10" fill="none" stroke="#e0e0e0" stroke-width="1.5"/><path d="M11 5L17 11L19 9L15 5L18 2L16 0L13 3Z" fill="#e0e0e0"/><path d="M9 16h3M13 16h3M17 16h3" stroke="#ccc" stroke-width="2.5"/></svg><svg style="left:30px;top:581px;" width="4" height="4" viewBox="0 0 4 4"><path d="M4 0V4H0Z" fill="#e0e0e0"/></svg><svg style="left:9px;top:591px;" width="22" height="21" viewBox="0 0 22 21"><path d="M5 20L1 12L3 10L6 13V3L8 2L9 3V10V1L11 0L12 1V10V2L14 1L15 2V10V4L17 3L18 4V14L15 20Z" fill="#d0d0d0"/></svg><svg style="left:9px;top:616px;" width="22" height="21" viewBox="0 0 22 21"><circle cx="8.5" cy="8.5" r="6.5" fill="#888" stroke="#ddd" stroke-width="2"/><path d="M13 13L20 20" stroke="#ddd" stroke-width="3.5"/></svg><div class="a" style="left:3px;top:643px;width:34px;height:1px;background:#3c3c3c"></div><div class="a" style="left:8px;top:648px;width:14px;height:13px;background:#fff;border:1px solid #999"></div><div class="a" style="left:17px;top:657px;width:13px;height:13px;background:#4a4a4a;border:2px solid #fff"></div><svg style="left:18px;top:658px;" width="11" height="11" viewBox="0 0 11 11"><path d="M1 10L10 1" stroke="#ff1010" stroke-width="3"/></svg><svg style="left:23px;top:645px;" width="9" height="9" viewBox="0 0 9 9"><path d="M1 2Q7 2 7 8M5 6L7 8.5L9 6M3 0L1 2L3 4" stroke="#e0e0e0" fill="none" stroke-width="1"/></svg><div class="a" style="left:6px;top:669px;width:9px;height:9px;background:#fff;border:1px solid #666"></div><svg style="left:6px;top:669px;" width="9" height="9" viewBox="0 0 9 9"><path d="M0 9L9 0" stroke="#ff1010" stroke-width="1.5"/></svg><div class="a" style="left:11px;top:674px;width:9px;height:8px;background:#111;border:1.5px solid #fff"></div><div class="a" style="left:6px;top:689px;width:13px;height:13px;background:#3a3a3a"></div><svg style="left:6px;top:689px;" width="13" height="13" viewBox="0 0 13 13"><rect x="1.5" y="1.5" width="10" height="10" fill="none" stroke="#bbb" stroke-width="1.5"/></svg><div class="t" style="left:21px;top:686px;font-size:17px;color:#777;font-family:'Liberation Serif',serif">T</div><div class="a" style="left:3px;top:705px;width:34px;height:1px;background:#3c3c3c"></div><div class="a" style="left:5px;top:711px;width:29px;height:23px;background:#363636"></div><div class="a" style="left:12px;top:715px;width:15px;height:14px;background:#fff"></div><svg style="left:29px;top:728px;" width="4" height="4" viewBox="0 0 4 4"><path d="M4 0V4H0Z" fill="#e0e0e0"/></svg><div class="a" style="left:3px;top:739px;width:34px;height:1px;background:#3c3c3c"></div><div class="a" style="left:5px;top:744px;width:29px;height:24px;background:#363636"></div><svg style="left:13px;top:750px;" width="15" height="13" viewBox="0 0 15 13"><rect x="0.8" y="0.8" width="13.4" height="11.4" fill="#444" stroke="#ddd" stroke-width="1.6"/><path d="M1 3.5H14" stroke="#ddd" stroke-width="1.2"/><path d="M3 6H7V9H12" fill="none" stroke="#ddd" stroke-width="1.6"/></svg><svg style="left:29px;top:763px;" width="4" height="4" viewBox="0 0 4 4"><path d="M4 0V4H0Z" fill="#e0e0e0"/></svg><div class="a" style="left:90px;top:249px;width:1307px;height:1px;background:#c080ff"></div><div class="a" style="left:90px;top:249px;width:1.5px;height:661px;background:#ff80ff"></div><div class="a" style="left:90px;top:909px;width:1307px;height:1.5px;background:#c890ff"></div><div class="a" style="left:214px;top:402px;width:177px;height:178px;background:#277891"></div><div class="a" style="left:391px;top:402px;width:177px;height:178px;background:#69b74a"></div><div class="a" style="left:214px;top:580px;width:177px;height:177px;background:#d8901c"></div><div class="a" style="left:391px;top:580px;width:177px;height:177px;background:#d82a2e"></div><svg style="left:214px;top:402px;" width="355" height="356" viewBox="0 0 355 356"><path d="M0.5 0.5H354.5V355.5H0.5Z M177 0V356 M0 178H355" fill="none" stroke="#7fe07f" stroke-width="1"/></svg><svg style="left:214px;top:402px;" width="355" height="356" viewBox="0 0 355 356"><path d="M65 29 L72 29 L73 109 L79 109 L79 29 L86 29 L86 109 L94 109 L94 29 L101 29 L101 109 L107.5 109 L109 29 L116 29 L122 95 Q124 118 112 133 Q102 145 101 160 Q100 175 103 192 L103 312 Q103 325 90.5 325 Q78 325 78 312 L78 192 Q81 175 80 160 Q79 145 69 133 Q57 118 59 95 Z" fill="#fff"/><path d="M283 29 Q266 38 256 90 Q246 140 245 190 L245 210 Q262 214 262 232 Q262 240 258 248 L258 310 Q258 325 271 325 Q284 325 284 310 L284 30 Z" fill="#fff"/></svg><svg style="left:214px;top:402px;" width="355" height="356" viewBox="0 0 355 356"><rect x="57.5" y="29.5" width="67" height="295" fill="none" stroke="#7fe07f" stroke-width="1"/><rect x="54.5" y="26.5" width="6" height="6" fill="#fff" stroke="#6ad86a" stroke-width="1"/><rect x="54.5" y="174" width="6" height="6" fill="#fff" stroke="#6ad86a" stroke-width="1"/><rect x="54.5" y="321.5" width="6" height="6" fill="#fff" stroke="#6ad86a" stroke-width="1"/><rect x="88" y="26.5" width="6" height="6" fill="#fff" stroke="#6ad86a" stroke-width="1"/><rect x="88" y="321.5" width="6" height="6" fill="#fff" stroke="#6ad86a" stroke-width="1"/><rect x="121.5" y="26.5" width="6" height="6" fill="#fff" stroke="#6ad86a" stroke-width="1"/><rect x="121.5" y="174" width="6" height="6" fill="#fff" stroke="#6ad86a" stroke-width="1"/><rect x="121.5" y="321.5" width="6" height="6" fill="#fff" stroke="#6ad86a" stroke-width="1"/></svg><div class="a" style="left:1397px;top:100px;width:253px;height:930px;background:#353535"></div><div class="a" style="left:1397px;top:110px;width:250px;height:17px;background:#333;border-top:1px solid #3e3e3e;border-radius:4px 4px 0 0"></div><svg style="left:1612px;top:115px;" width="9" height="8" viewBox="0 0 9 8"><path d="M4 0L0 4L4 8ZM9 0L5 4L9 8Z" fill="#cfcfcf"/></svg><svg style="left:1633px;top:115px;" width="8" height="8" viewBox="0 0 8 8"><path d="M1 1L7 7M7 1L1 7" stroke="#d0d0d0" stroke-width="1.6"/></svg><div class="a" style="left:1397px;top:127px;width:251px;height:2px;background:#2d2d2d"></div><div class="a" style="left:1398px;top:127px;width:249px;height:21px;background:#383838"></div><div class="a" style="left:1398px;top:127px;width:59px;height:21px;background:#4a4a4a"></div><svg style="left:1403px;top:131px;" width="7" height="12" viewBox="0 0 7 12"><path d="M0.5 4.5L3.5 1L6.5 4.5M0.5 7.5L3.5 11L6.5 7.5" fill="none" stroke="#cfcfcf" stroke-width="1.5"/></svg><div class="t" style="left:1414px;top:131px;font-size:13px;color:#e8e8e8;font-weight:bold">Seiten</div><svg style="left:1624px;top:132px;" width="17" height="10" viewBox="0 0 17 10"><path d="M0 3H5L2.5 6Z" fill="#cfcfcf"/><path d="M6 1H17M6 4H17M6 7H17M6 9.5H17" stroke="#cfcfcf" stroke-width="1.1"/></svg><div class="a" style="left:1398px;top:148px;width:249px;height:845px;background:#4a4a4a"></div><div class="t" style="left:1402px;top:165px;font-size:10.5px;color:#c8c8c8;">[Ohne]</div><div class="t" style="left:1402px;top:200px;font-size:10.5px;color:#c8c8c8;">A-Musterseite</div><div class="a" style="left:1609px;top:152px;width:12px;height:29px;background:#fff"></div><div class="a" style="left:1609px;top:187px;width:12px;height:29px;background:#fff"></div><div class="a" style="left:1632px;top:148px;width:15px;height:87px;background:#404040"></div><svg style="left:1635px;top:155px;" width="9" height="6" viewBox="0 0 9 6"><path d="M0 6H9L4.5 0Z" fill="#777"/></svg><svg style="left:1635px;top:224px;" width="9" height="6" viewBox="0 0 9 6"><path d="M0 0H9L4.5 6Z" fill="#777"/></svg><div class="a" style="left:1398px;top:235px;width:249px;height:2px;background:#5a5a5a"></div><div class="a" style="left:1398px;top:237px;width:249px;height:3px;background:#3c3c3c"></div><div class="a" style="left:1632px;top:240px;width:15px;height:752px;background:#404040"></div><svg style="left:1635px;top:246px;" width="9" height="6" viewBox="0 0 9 6"><path d="M0 6H9L4.5 0Z" fill="#777"/></svg><svg style="left:1635px;top:982px;" width="9" height="6" viewBox="0 0 9 6"><path d="M0 0H9L4.5 6Z" fill="#777"/></svg><svg style="left:1430px;top:243px;" width="12" height="7" viewBox="0 0 12 7"><path d="M0 0H12L6 7Z" fill="#8a8a8a"/></svg><div class="a" style="left:1418px;top:252px;width:38px;height:87px;background:#1d3548;border:1px solid #777"></div><svg style="left:1419px;top:253px;" width="36" height="85" viewBox="0 0 36 85"><path d="M0 6L10 13V42L0 34Z" fill="#e8413c"/><path d="M0 51L10 42V68L0 78Z" fill="#3aa9d0"/><polygon points="16,60 20,55 24,57 24,63 20,65 16,63" fill="#e8413c" transform="translate(0,-1)"/><polygon points="24,57 28,55 32,60 28,65 24,63" fill="#3aa9d0" transform="translate(0,-1)"/></svg><div class="t" style="left:1436px;top:308px;font-size:11px;color:#fff;transform:rotate(-90deg);transform-origin:0 0;letter-spacing:-0.3px">Campell</div><div class="a" style="left:1432px;top:252px;width:10px;height:11px;background:#fff"></div><div class="t" style="left:1433px;top:253px;font-size:10px;color:#111;font-weight:bold">A</div><div class="t" style="left:1432px;top:349px;font-size:11px;color:#cfcfcf;">1</div><div class="a" style="left:1418px;top:374px;width:38px;height:88px;background:#7d9dbb;border:1px solid #8aa"></div><div class="t" style="left:1446px;top:388px;font-size:18px;color:#1e3550;transform:rotate(90deg);transform-origin:0 0;font-weight:bold;letter-spacing:-1.2px">SAIL</div><svg style="left:1424px;top:388px;" width="26" height="58" viewBox="0 0 26 58"><path d="M14 37H24L14 46.5Z" fill="#fff"/><path d="M4 47H14L4 56Z" fill="#1e3550"/><path d="M1.5 2V56" stroke="#3a5570" stroke-width="1" stroke-dasharray="2 1"/></svg><div class="a" style="left:1432px;top:374px;width:10px;height:11px;background:#fff"></div><div class="t" style="left:1433px;top:375px;font-size:10px;color:#111;font-weight:bold">A</div><div class="t" style="left:1432px;top:471px;font-size:11px;color:#cfcfcf;">2</div><div class="a" style="left:1418px;top:497px;width:38px;height:87px;background:#a4a8ae;border:1px solid #999"></div><div class="a" style="left:1432px;top:497px;width:10px;height:11px;background:#fff"></div><div class="t" style="left:1433px;top:498px;font-size:10px;color:#111;font-weight:bold">A</div><svg style="left:1426px;top:555px;" width="21" height="20" viewBox="0 0 21 20"><rect x="0" y="0" width="10.5" height="10" fill="#6aaa55"/><rect x="10.5" y="0" width="10.5" height="10" fill="#c84a4a"/><rect x="0" y="10" width="10.5" height="10" fill="#2e7e94"/><rect x="10.5" y="10" width="10.5" height="10" fill="#c89040"/><path d="M3 5H18M3 15H18" stroke="#ddd" stroke-width="2"/></svg><div class="a" style="left:1428px;top:590px;width:14px;height:15px;background:#3c4d63"></div><div class="t" style="left:1431px;top:592px;font-size:11px;color:#ffffff;font-weight:bold">3</div><svg style="left:1458px;top:410px;" width="14" height="12" viewBox="0 0 14 12"><path d="M2 6A5 5 0 0 1 11 3M12 6A5 5 0 0 1 3 9" fill="none" stroke="#ddd" stroke-width="1.6"/><path d="M9 0L13 3L9 5ZM5 12L1 9L5 7Z" fill="#ddd"/></svg><svg style="left:1458px;top:533px;" width="14" height="12" viewBox="0 0 14 12"><path d="M2 6A5 5 0 0 1 11 3M12 6A5 5 0 0 1 3 9" fill="none" stroke="#ddd" stroke-width="1.6"/><path d="M9 0L13 3L9 5ZM5 12L1 9L5 7Z" fill="#ddd"/></svg><div class="a" style="left:1398px;top:993px;width:249px;height:25px;background:#474747;border-top:1px solid #3a3a3a"></div><div class="t" style="left:1402px;top:1001px;font-size:11px;color:#c8c8c8;width:118px;overflow:hidden">3 Seiten auf 3 Druckbögen</div><div class="a" style="left:1520px;top:1000px;width:12px;height:14px;background:#474747"></div><svg style="left:1527px;top:998px;" width="18" height="14" viewBox="0 0 18 14"><path d="M1 5H8L9 3H13V13H1Z" fill="#d0d0d0"/><path d="M6 1H12L15 4V12H6Z" fill="#e0e0e0" stroke="#474747"/><path d="M15 12H18L16.5 14Z" fill="#ccc"/></svg><svg style="left:1566px;top:999px;" width="13" height="13" viewBox="0 0 13 13"><path d="M0 0H13V13H5L0 8Z" fill="#d0d0d0"/><path d="M0 8H5V13" fill="#888"/></svg><svg style="left:1601px;top:998px;" width="14" height="15" viewBox="0 0 14 15"><path d="M1 3H13M5 3V1H9V3" stroke="#d0d0d0" stroke-width="1.5" fill="none"/><path d="M2 5H12L11 14H3Z" fill="none" stroke="#d0d0d0" stroke-width="1.5"/><path d="M5 6V13M7 6V13M9 6V13" stroke="#d0d0d0"/></svg><div class="a" style="left:1398px;top:1018px;width:249px;height:10px;background:#3c3c3c;border-top:1px solid #2a2a2a"></div><svg style="left:1511px;top:1021px;" width="25" height="5" viewBox="0 0 25 5"><path d="M0.5 0V5" stroke="#111"/><path d="M2.5 0V5" stroke="#111"/><path d="M4.5 0V5" stroke="#111"/><path d="M6.5 0V5" stroke="#111"/><path d="M8.5 0V5" stroke="#111"/><path d="M10.5 0V5" stroke="#111"/><path d="M12.5 0V5" stroke="#111"/><path d="M14.5 0V5" stroke="#111"/><path d="M16.5 0V5" stroke="#111"/><path d="M18.5 0V5" stroke="#111"/><path d="M20.5 0V5" stroke="#111"/><path d="M22.5 0V5" stroke="#111"/></svg><div class="a" style="left:1670px;top:100px;width:250px;height:930px;background:#353535"></div><div class="a" style="left:1670px;top:100px;width:1px;height:930px;background:#232323"></div><svg style="left:1901px;top:104px;" width="9" height="8" viewBox="0 0 9 8"><path d="M0 0L4 4L0 8ZM5 0L9 4L5 8Z" fill="#cfcfcf"/></svg><div class="a" style="left:1671px;top:116px;width:249px;height:20px;background:#383838"></div><div class="a" style="left:1672px;top:116px;width:105px;height:20px;background:#3b3b3b"></div><div class="t" style="left:1679px;top:120px;font-size:11.8px;color:#9a9a9a;font-weight:bold">Verknüpfungen</div><div class="a" style="left:1777px;top:116px;width:63px;height:20px;background:#4a4a4a"></div><svg style="left:1782px;top:120px;" width="7" height="12" viewBox="0 0 7 12"><path d="M0.5 4.5L3.5 1L6.5 4.5M0.5 7.5L3.5 11L6.5 7.5" fill="none" stroke="#cfcfcf" stroke-width="1.5"/></svg><div class="t" style="left:1792px;top:120px;font-size:11.8px;color:#ececec;font-weight:bold">Ebenen</div><svg style="left:1898px;top:121px;" width="17" height="10" viewBox="0 0 17 10"><path d="M0 3H5L2.5 6Z" fill="#cfcfcf"/><path d="M6 1H17M6 4H17M6 7H17M6 9.5H17" stroke="#cfcfcf" stroke-width="1.1"/></svg><div class="a" style="left:1671px;top:136px;width:249px;height:2px;background:#2f2f2f"></div><div class="a" style="left:1671px;top:138px;width:249px;height:161px;background:#4a4a4a"></div><div class="a" style="left:1671px;top:160px;width:232px;height:1px;background:#3a3a3a"></div><div class="a" style="left:1695px;top:138px;width:1px;height:22px;background:#3c3c3c"></div><svg style="left:1676px;top:143px;" width="15" height="12" viewBox="0 0 15 12"><path d="M0.5 6.5Q7.5 -2.5 14.5 6.5Q7.5 14 0.5 6.5Z" fill="#bdbdbd"/><circle cx="7.5" cy="6" r="3.6" fill="#2a2a2a"/><circle cx="8.6" cy="4.8" r="1.1" fill="#ddd"/><path d="M2 3.5Q7.5 -1 13 3.5" fill="none" stroke="#222" stroke-width="1"/></svg><div class="a" style="left:1717px;top:140px;width:5px;height:19px;background:#4ced4c"></div><svg style="left:1726px;top:146px;" width="11" height="6" viewBox="0 0 11 6"><path d="M0 0H11L5.5 6Z" fill="#cfcfcf"/></svg><div class="t" style="left:1739px;top:146px;font-size:10.5px;color:#c8c8c8;">Meine Ebene</div><div class="a" style="left:1888px;top:144px;width:10px;height:10px;background:#4ced4c;border:2px solid #111"></div><div class="a" style="left:1723px;top:161px;width:180px;height:23px;background:#48566a"></div><div class="a" style="left:1671px;top:183px;width:232px;height:1px;background:#3a3a3a"></div><div class="a" style="left:1695px;top:161px;width:1px;height:22px;background:#3c3c3c"></div><svg style="left:1676px;top:166px;" width="15" height="12" viewBox="0 0 15 12"><path d="M0.5 6.5Q7.5 -2.5 14.5 6.5Q7.5 14 0.5 6.5Z" fill="#bdbdbd"/><circle cx="7.5" cy="6" r="3.6" fill="#2a2a2a"/><circle cx="8.6" cy="4.8" r="1.1" fill="#ddd"/><path d="M2 3.5Q7.5 -1 13 3.5" fill="none" stroke="#222" stroke-width="1"/></svg><div class="a" style="left:1717px;top:163px;width:5px;height:19px;background:#4ced4c"></div><svg style="left:1737px;top:169px;" width="11" height="6" viewBox="0 0 11 6"><path d="M0 0H11L5.5 6Z" fill="#cfcfcf"/></svg><div class="t" style="left:1753px;top:169px;font-size:10.5px;color:#ffffff;font-weight:bold">Logo</div><div class="a" style="left:1889px;top:168px;width:8px;height:8px;background:#4ced4c;border:2px solid #111"></div><div class="a" style="left:1671px;top:206px;width:232px;height:1px;background:#3a3a3a"></div><div class="a" style="left:1695px;top:184px;width:1px;height:22px;background:#3c3c3c"></div><svg style="left:1676px;top:189px;" width="15" height="12" viewBox="0 0 15 12"><path d="M0.5 6.5Q7.5 -2.5 14.5 6.5Q7.5 14 0.5 6.5Z" fill="#bdbdbd"/><circle cx="7.5" cy="6" r="3.6" fill="#2a2a2a"/><circle cx="8.6" cy="4.8" r="1.1" fill="#ddd"/><path d="M2 3.5Q7.5 -1 13 3.5" fill="none" stroke="#222" stroke-width="1"/></svg><div class="a" style="left:1717px;top:186px;width:5px;height:19px;background:#4ced4c"></div><svg style="left:1749px;top:192px;" width="11" height="6" viewBox="0 0 11 6"><path d="M0 0H11L5.5 6Z" fill="#cfcfcf"/></svg><div class="t" style="left:1764px;top:192px;font-size:10.5px;color:#c8c8c8;">Besteck</div><div class="a" style="left:1889px;top:191px;width:8px;height:8px;background:#4ced4c;border:2px solid #111"></div><div class="a" style="left:1671px;top:229px;width:232px;height:1px;background:#3a3a3a"></div><div class="a" style="left:1695px;top:207px;width:1px;height:22px;background:#3c3c3c"></div><svg style="left:1676px;top:212px;" width="15" height="12" viewBox="0 0 15 12"><path d="M0.5 6.5Q7.5 -2.5 14.5 6.5Q7.5 14 0.5 6.5Z" fill="#bdbdbd"/><circle cx="7.5" cy="6" r="3.6" fill="#2a2a2a"/><circle cx="8.6" cy="4.8" r="1.1" fill="#ddd"/><path d="M2 3.5Q7.5 -1 13 3.5" fill="none" stroke="#222" stroke-width="1"/></svg><div class="a" style="left:1717px;top:209px;width:5px;height:19px;background:#4ced4c"></div><div class="t" style="left:1776px;top:215px;font-size:10.5px;color:#c8c8c8;">Gabel</div><div class="a" style="left:1888px;top:213px;width:10px;height:10px;background:#4ced4c;border:2px solid #111"></div><div class="a" style="left:1671px;top:252px;width:232px;height:1px;background:#3a3a3a"></div><div class="a" style="left:1695px;top:230px;width:1px;height:22px;background:#3c3c3c"></div><svg style="left:1676px;top:235px;" width="15" height="12" viewBox="0 0 15 12"><path d="M0.5 6.5Q7.5 -2.5 14.5 6.5Q7.5 14 0.5 6.5Z" fill="#bdbdbd"/><circle cx="7.5" cy="6" r="3.6" fill="#2a2a2a"/><circle cx="8.6" cy="4.8" r="1.1" fill="#ddd"/><path d="M2 3.5Q7.5 -1 13 3.5" fill="none" stroke="#222" stroke-width="1"/></svg><div class="a" style="left:1717px;top:232px;width:5px;height:19px;background:#4ced4c"></div><div class="t" style="left:1776px;top:238px;font-size:10.5px;color:#c8c8c8;">Messer</div><div class="a" style="left:1888px;top:236px;width:10px;height:10px;border:1px solid #2e2e2e;background:#474747"></div><div class="a" style="left:1671px;top:275px;width:232px;height:1px;background:#3a3a3a"></div><div class="a" style="left:1695px;top:253px;width:1px;height:22px;background:#3c3c3c"></div><svg style="left:1676px;top:258px;" width="15" height="12" viewBox="0 0 15 12"><path d="M0.5 6.5Q7.5 -2.5 14.5 6.5Q7.5 14 0.5 6.5Z" fill="#bdbdbd"/><circle cx="7.5" cy="6" r="3.6" fill="#2a2a2a"/><circle cx="8.6" cy="4.8" r="1.1" fill="#ddd"/><path d="M2 3.5Q7.5 -1 13 3.5" fill="none" stroke="#222" stroke-width="1"/></svg><div class="a" style="left:1717px;top:255px;width:5px;height:19px;background:#4ced4c"></div><svg style="left:1752px;top:259px;" width="6" height="11" viewBox="0 0 6 11"><path d="M0 0V11L6 5.5Z" fill="#cfcfcf"/></svg><div class="t" style="left:1765px;top:261px;font-size:10.5px;color:#c8c8c8;">Quadrate</div><div class="a" style="left:1888px;top:259px;width:10px;height:10px;border:1px solid #2e2e2e;background:#474747"></div><div class="a" style="left:1671px;top:298px;width:232px;height:1px;background:#3a3a3a"></div><div class="a" style="left:1695px;top:276px;width:1px;height:22px;background:#3c3c3c"></div><svg style="left:1676px;top:281px;" width="15" height="12" viewBox="0 0 15 12"><path d="M0.5 6.5Q7.5 -2.5 14.5 6.5Q7.5 14 0.5 6.5Z" fill="#bdbdbd"/><circle cx="7.5" cy="6" r="3.6" fill="#2a2a2a"/><circle cx="8.6" cy="4.8" r="1.1" fill="#ddd"/><path d="M2 3.5Q7.5 -1 13 3.5" fill="none" stroke="#222" stroke-width="1"/></svg><div class="a" style="left:1717px;top:278px;width:5px;height:19px;background:#f07818"></div><svg style="left:1728px;top:282px;" width="6" height="11" viewBox="0 0 6 11"><path d="M0 0V11L6 5.5Z" fill="#cfcfcf"/></svg><div class="t" style="left:1739px;top:284px;font-size:10.5px;color:#c8c8c8;">Vorlage</div><div class="a" style="left:1888px;top:282px;width:10px;height:10px;border:1px solid #2e2e2e;background:#474747"></div><svg style="left:1862px;top:141px;" width="17" height="17" viewBox="0 0 17 17"><path d="M3 14L6 7L12 2L15 5L10 11Z" fill="#ccc"/><path d="M3 14L8 9" stroke="#555"/></svg><svg style="left:1700px;top:282px;" width="11" height="13" viewBox="0 0 11 13"><rect x="1" y="5" width="9" height="7" fill="#cfcfcf"/><path d="M3 5V3A2.5 2.5 0 0 1 8 3V5" fill="none" stroke="#cfcfcf" stroke-width="1.5"/></svg><div class="a" style="left:1905px;top:138px;width:14px;height:161px;background:#3c3c3c"></div><svg style="left:1908px;top:143px;" width="9" height="6" viewBox="0 0 9 6"><path d="M0 6H9L4.5 0Z" fill="#ddd"/></svg><div class="a" style="left:1906px;top:158px;width:12px;height:102px;background:#8a8a8a"></div><svg style="left:1908px;top:287px;" width="9" height="6" viewBox="0 0 9 6"><path d="M0 0H9L4.5 6Z" fill="#ddd"/></svg><div class="a" style="left:1671px;top:299px;width:249px;height:22px;background:#474747;border-top:1px solid #3a3a3a"></div><div class="t" style="left:1676px;top:304px;font-size:10.5px;color:#c8c8c8;">Seite: 3, 2 Ebenen</div><svg style="left:1842px;top:302px;" width="12" height="12" viewBox="0 0 12 12"><path d="M0 0H12V12H4L0 8Z" fill="#d0d0d0"/><path d="M0 8H4V12" fill="#888"/></svg><svg style="left:1876px;top:301px;" width="14" height="14" viewBox="0 0 14 14"><path d="M1 2.5H13M5 2.5V1H9V2.5" stroke="#d0d0d0" stroke-width="1.4" fill="none"/><path d="M2 4.5H12L11 13.5H3Z" fill="none" stroke="#d0d0d0" stroke-width="1.4"/><path d="M5 6V12M7 6V12M9 6V12" stroke="#d0d0d0"/></svg><div class="a" style="left:1671px;top:320px;width:249px;height:2px;background:#2a2a2a"></div><div class="a" style="left:1671px;top:322px;width:249px;height:20px;background:#383838"></div><div class="a" style="left:1672px;top:322px;width:58px;height:20px;background:#3b3b3b"></div><div class="t" style="left:1679px;top:326px;font-size:11.8px;color:#9a9a9a;font-weight:bold">Kontur</div><div class="a" style="left:1730px;top:322px;width:82px;height:20px;background:#4a4a4a"></div><svg style="left:1735px;top:326px;" width="7" height="12" viewBox="0 0 7 12"><path d="M0.5 4.5L3.5 1L6.5 4.5M0.5 7.5L3.5 11L6.5 7.5" fill="none" stroke="#cfcfcf" stroke-width="1.5"/></svg><div class="t" style="left:1745px;top:326px;font-size:11.8px;color:#ececec;font-weight:bold">Farbfelder</div><div class="a" style="left:1812px;top:322px;width:59px;height:20px;background:#3b3b3b"></div><div class="t" style="left:1819px;top:326px;font-size:11.8px;color:#9a9a9a;font-weight:bold">Verlauf</div><svg style="left:1898px;top:327px;" width="17" height="10" viewBox="0 0 17 10"><path d="M0 3H5L2.5 6Z" fill="#cfcfcf"/><path d="M6 1H17M6 4H17M6 7H17M6 9.5H17" stroke="#cfcfcf" stroke-width="1.1"/></svg><div class="a" style="left:1671px;top:342px;width:249px;height:391px;background:#4a4a4a"></div><div class="a" style="left:1678px;top:345px;width:14px;height:14px;background:#fff;border:1px solid #888"></div><div class="a" style="left:1687px;top:354px;width:14px;height:14px;background:#4a4a4a;border:2px solid #fff"></div><svg style="left:1688px;top:355px;" width="12" height="12" viewBox="0 0 12 12"><path d="M1 11L11 1" stroke="#ff1010" stroke-width="2.5"/></svg><svg style="left:1695px;top:344px;" width="9" height="9" viewBox="0 0 9 9"><path d="M1 2Q7 2 7 8M5 6L7 8.5L9 6M3 0L1 2L3 4" stroke="#e0e0e0" fill="none" stroke-width="1"/></svg><div class="a" style="left:1716px;top:350px;width:14px;height:14px;background:#3a3a3a;border:1px solid #2a2a2a"></div><div class="a" style="left:1718px;top:352px;width:10px;height:10px;border:1.5px solid #cfcfcf"></div><div class="t" style="left:1736px;top:349px;font-size:15px;color:#777;font-family:'Liberation Serif',serif">T</div><div class="t" style="left:1786px;top:352px;font-size:10.5px;color:#c8c8c8;">Farbton:</div><div class="a" style="left:1830px;top:350px;width:35px;height:14px;background:#707070;border:1px solid #3a3a3a"></div><div class="t" style="left:1833px;top:352px;font-size:11px;color:#9a9a9a;">100</div><div class="a" style="left:1865px;top:350px;width:17px;height:14px;background:#4a4a4a;border:1px solid #3a3a3a"></div><svg style="left:1871px;top:353px;" width="5" height="8" viewBox="0 0 5 8"><path d="M0 0V8L5 4Z" fill="#888"/></svg><div class="t" style="left:1885px;top:352px;font-size:10.5px;color:#c8c8c8;">%</div><div class="a" style="left:1671px;top:372px;width:235px;height:1px;background:#3c3c3c"></div><div class="a" style="left:1671px;top:396px;width:235px;height:1px;background:#3c3c3c"></div><div class="a" style="left:1689px;top:377px;width:15px;height:15px;background:#fff;border:2px solid #111"></div><svg style="left:1690px;top:378px;" width="13" height="13" viewBox="0 0 13 13"><path d="M1 12L12 1" stroke="#ff1010" stroke-width="2.2"/></svg><div class="t" style="left:1708px;top:381px;font-size:10.5px;color:#c8c8c8;">[Ohne]</div><svg style="left:1848px;top:378px;" width="14" height="14" viewBox="0 0 14 14"><path d="M2 12L10 3L12 5L4 13Z" fill="#cfcfcf"/><path d="M1 1L13 13M13 1L1 13" stroke="#cfcfcf" stroke-width="1.4"/></svg><div class="a" style="left:1885px;top:378px;width:14px;height:14px;background:#ddd;border:1px solid #aaa"></div><svg style="left:1886px;top:379px;" width="12" height="12" viewBox="0 0 12 12"><path d="M1 11L11 1" stroke="#ff1010" stroke-width="1.2"/></svg><div class="a" style="left:1671px;top:420px;width:235px;height:1px;background:#3c3c3c"></div><div class="a" style="left:1689px;top:401px;width:15px;height:15px;background:#000;border:2px solid #111"></div><div class="t" style="left:1708px;top:405px;font-size:10.5px;color:#c8c8c8;">[Passermarken]</div><svg style="left:1848px;top:402px;" width="14" height="14" viewBox="0 0 14 14"><path d="M2 12L10 3L12 5L4 13Z" fill="#cfcfcf"/><path d="M1 1L13 13M13 1L1 13" stroke="#cfcfcf" stroke-width="1.4"/></svg><div class="a" style="left:1885px;top:402px;width:14px;height:14px;background:#ccc;border:1px solid #aaa"></div><svg style="left:1886px;top:403px;" width="12" height="12" viewBox="0 0 12 12"><circle cx="6" cy="6" r="3.5" fill="none" stroke="#222"/><path d="M6 0V12M0 6H12" stroke="#222"/></svg><div class="a" style="left:1671px;top:421px;width:235px;height:24px;background:#48566a"></div><div class="a" style="left:1671px;top:444px;width:235px;height:1px;background:#3c3c3c"></div><div class="a" style="left:1689px;top:425px;width:15px;height:15px;background:#fff;border:2px solid #111"></div><div class="t" style="left:1708px;top:429px;font-size:10.5px;color:#ffffff;font-weight:bold">[Papier]</div><div class="a" style="left:1671px;top:468px;width:235px;height:1px;background:#3c3c3c"></div><div class="a" style="left:1689px;top:449px;width:15px;height:15px;background:#000;border:2px solid #111"></div><div class="t" style="left:1708px;top:453px;font-size:10.5px;color:#c8c8c8;">[Schwarz]</div><svg style="left:1848px;top:450px;" width="14" height="14" viewBox="0 0 14 14"><path d="M2 12L10 3L12 5L4 13Z" fill="#cfcfcf"/><path d="M1 1L13 13M13 1L1 13" stroke="#cfcfcf" stroke-width="1.4"/></svg><svg style="left:1866px;top:450px;" width="14" height="14" viewBox="0 0 14 14"><rect x="0.5" y="0.5" width="13" height="13" fill="#ddd" stroke="#eee"/><rect x="2" y="2" width="10" height="10" fill="#555"/><rect x="2" y="2" width="1" height="1" fill="#aaa"/><rect x="2" y="4" width="1" height="1" fill="#aaa"/><rect x="2" y="6" width="1" height="1" fill="#aaa"/><rect x="2" y="8" width="1" height="1" fill="#aaa"/><rect x="2" y="10" width="1" height="1" fill="#aaa"/><rect x="4" y="2" width="1" height="1" fill="#aaa"/><rect x="4" y="4" width="1" height="1" fill="#aaa"/><rect x="4" y="6" width="1" height="1" fill="#aaa"/><rect x="4" y="8" width="1" height="1" fill="#aaa"/><rect x="4" y="10" width="1" height="1" fill="#aaa"/><rect x="6" y="2" width="1" height="1" fill="#aaa"/><rect x="6" y="4" width="1" height="1" fill="#aaa"/><rect x="6" y="6" width="1" height="1" fill="#aaa"/><rect x="6" y="8" width="1" height="1" fill="#aaa"/><rect x="6" y="10" width="1" height="1" fill="#aaa"/><rect x="8" y="2" width="1" height="1" fill="#aaa"/><rect x="8" y="4" width="1" height="1" fill="#aaa"/><rect x="8" y="6" width="1" height="1" fill="#aaa"/><rect x="8" y="8" width="1" height="1" fill="#aaa"/><rect x="8" y="10" width="1" height="1" fill="#aaa"/><rect x="10" y="2" width="1" height="1" fill="#aaa"/><rect x="10" y="4" width="1" height="1" fill="#aaa"/><rect x="10" y="6" width="1" height="1" fill="#aaa"/><rect x="10" y="8" width="1" height="1" fill="#aaa"/><rect x="10" y="10" width="1" height="1" fill="#aaa"/></svg><svg style="left:1885px;top:450px;" width="14" height="14" viewBox="0 0 14 14"><rect x="0.5" y="0.5" width="13" height="13" fill="#eee"/><path d="M1.5 1.5H12.5L7 7Z" fill="#e020e0"/><path d="M12.5 1.5V12.5L7 7Z" fill="#f0f000"/><path d="M12.5 12.5H1.5L7 7Z" fill="#111"/><path d="M1.5 12.5V1.5L7 7Z" fill="#00d0f0"/></svg><div class="a" style="left:1671px;top:492px;width:235px;height:1px;background:#3c3c3c"></div><div class="a" style="left:1689px;top:473px;width:15px;height:15px;background:#e8902a;border:2px solid #111"></div><div class="t" style="left:1708px;top:477px;font-size:10.5px;color:#c8c8c8;">bleed area</div><svg style="left:1866px;top:474px;" width="14" height="14" viewBox="0 0 14 14"><rect x="0.5" y="0.5" width="13" height="13" fill="#555" stroke="#ccc"/><circle cx="7" cy="7" r="2.5" fill="#ccc"/></svg><svg style="left:1885px;top:474px;" width="14" height="14" viewBox="0 0 14 14"><rect x="0.5" y="0.5" width="13" height="13" fill="#eee"/><path d="M1.5 1.5H12.5L7 7Z" fill="#e020e0"/><path d="M12.5 1.5V12.5L7 7Z" fill="#f0f000"/><path d="M12.5 12.5H1.5L7 7Z" fill="#111"/><path d="M1.5 12.5V1.5L7 7Z" fill="#00d0f0"/></svg><div class="a" style="left:1671px;top:516px;width:235px;height:1px;background:#3c3c3c"></div><div class="a" style="left:1689px;top:497px;width:15px;height:15px;background:#a8aca4;border:2px solid #111"></div><div class="t" style="left:1708px;top:501px;font-size:10.5px;color:#c8c8c8;">safety distance</div><svg style="left:1866px;top:498px;" width="14" height="14" viewBox="0 0 14 14"><rect x="0.5" y="0.5" width="13" height="13" fill="#555" stroke="#ccc"/><circle cx="7" cy="7" r="2.5" fill="#ccc"/></svg><svg style="left:1885px;top:498px;" width="14" height="14" viewBox="0 0 14 14"><rect x="0.5" y="0.5" width="13" height="13" fill="#eee"/><path d="M1.5 1.5H12.5L7 7Z" fill="#e020e0"/><path d="M12.5 1.5V12.5L7 7Z" fill="#f0f000"/><path d="M12.5 12.5H1.5L7 7Z" fill="#111"/><path d="M1.5 12.5V1.5L7 7Z" fill="#00d0f0"/></svg><div class="a" style="left:1671px;top:540px;width:235px;height:1px;background:#3c3c3c"></div><div class="a" style="left:1689px;top:521px;width:15px;height:15px;background:#3a3e36;border:2px solid #111"></div><div class="t" style="left:1708px;top:525px;font-size:10.5px;color:#c8c8c8;">infos</div><svg style="left:1866px;top:522px;" width="14" height="14" viewBox="0 0 14 14"><rect x="0.5" y="0.5" width="13" height="13" fill="#555" stroke="#ccc"/><circle cx="7" cy="7" r="2.5" fill="#ccc"/></svg><svg style="left:1885px;top:522px;" width="14" height="14" viewBox="0 0 14 14"><rect x="0.5" y="0.5" width="13" height="13" fill="#eee"/><path d="M1.5 1.5H12.5L7 7Z" fill="#e020e0"/><path d="M12.5 1.5V12.5L7 7Z" fill="#f0f000"/><path d="M12.5 12.5H1.5L7 7Z" fill="#111"/><path d="M1.5 12.5V1.5L7 7Z" fill="#00d0f0"/></svg><div class="a" style="left:1671px;top:564px;width:235px;height:1px;background:#3c3c3c"></div><svg style="left:1676px;top:548px;" width="6" height="11" viewBox="0 0 6 11"><path d="M0 0V11L6 5.5Z" fill="#cfcfcf"/></svg><svg style="left:1688px;top:546px;" width="16" height="14" viewBox="0 0 16 14"><defs><linearGradient id="fg" x1="0" y1="0" x2="0" y2="1"><stop offset="0" stop-color="#eee"/><stop offset="1" stop-color="#bbb"/></linearGradient></defs><path d="M0 1H6L7.5 3H16V14H0Z" fill="url(#fg)"/></svg><div class="t" style="left:1708px;top:549px;font-size:10.5px;color:#c8c8c8;">Maschinenbauer</div><div class="a" style="left:1671px;top:588px;width:235px;height:1px;background:#3c3c3c"></div><svg style="left:1676px;top:572px;" width="6" height="11" viewBox="0 0 6 11"><path d="M0 0V11L6 5.5Z" fill="#cfcfcf"/></svg><svg style="left:1688px;top:570px;" width="16" height="14" viewBox="0 0 16 14"><defs><linearGradient id="fg" x1="0" y1="0" x2="0" y2="1"><stop offset="0" stop-color="#eee"/><stop offset="1" stop-color="#bbb"/></linearGradient></defs><path d="M0 1H6L7.5 3H16V14H0Z" fill="url(#fg)"/></svg><div class="t" style="left:1708px;top:573px;font-size:10.5px;color:#c8c8c8;">Bootsbauer</div><div class="a" style="left:1671px;top:612px;width:235px;height:1px;background:#3c3c3c"></div><svg style="left:1673px;top:598px;" width="11" height="6" viewBox="0 0 11 6"><path d="M0 0H11L5.5 6Z" fill="#cfcfcf"/></svg><svg style="left:1688px;top:594px;" width="16" height="14" viewBox="0 0 16 14"><defs><linearGradient id="fg" x1="0" y1="0" x2="0" y2="1"><stop offset="0" stop-color="#eee"/><stop offset="1" stop-color="#bbb"/></linearGradient></defs><path d="M0 1H6L7.5 3H16V14H0Z" fill="url(#fg)"/></svg><div class="t" style="left:1708px;top:597px;font-size:10.5px;color:#c8c8c8;">Menüservice</div><div class="a" style="left:1671px;top:636px;width:235px;height:1px;background:#3c3c3c"></div><div class="a" style="left:1707px;top:617px;width:15px;height:15px;background:#2a86a8;border:2px solid #111"></div><div class="t" style="left:1726px;top:621px;font-size:10.5px;color:#c8c8c8;">C=80 M=15 Y=20 K=30</div><svg style="left:1866px;top:618px;" width="14" height="14" viewBox="0 0 14 14"><rect x="0.5" y="0.5" width="13" height="13" fill="#ddd" stroke="#eee"/><rect x="2" y="2" width="10" height="10" fill="#555"/><rect x="2" y="2" width="1" height="1" fill="#aaa"/><rect x="2" y="4" width="1" height="1" fill="#aaa"/><rect x="2" y="6" width="1" height="1" fill="#aaa"/><rect x="2" y="8" width="1" height="1" fill="#aaa"/><rect x="2" y="10" width="1" height="1" fill="#aaa"/><rect x="4" y="2" width="1" height="1" fill="#aaa"/><rect x="4" y="4" width="1" height="1" fill="#aaa"/><rect x="4" y="6" width="1" height="1" fill="#aaa"/><rect x="4" y="8" width="1" height="1" fill="#aaa"/><rect x="4" y="10" width="1" height="1" fill="#aaa"/><rect x="6" y="2" width="1" height="1" fill="#aaa"/><rect x="6" y="4" width="1" height="1" fill="#aaa"/><rect x="6" y="6" width="1" height="1" fill="#aaa"/><rect x="6" y="8" width="1" height="1" fill="#aaa"/><rect x="6" y="10" width="1" height="1" fill="#aaa"/><rect x="8" y="2" width="1" height="1" fill="#aaa"/><rect x="8" y="4" width="1" height="1" fill="#aaa"/><rect x="8" y="6" width="1" height="1" fill="#aaa"/><rect x="8" y="8" width="1" height="1" fill="#aaa"/><rect x="8" y="10" width="1" height="1" fill="#aaa"/><rect x="10" y="2" width="1" height="1" fill="#aaa"/><rect x="10" y="4" width="1" height="1" fill="#aaa"/><rect x="10" y="6" width="1" height="1" fill="#aaa"/><rect x="10" y="8" width="1" height="1" fill="#aaa"/><rect x="10" y="10" width="1" height="1" fill="#aaa"/></svg><svg style="left:1885px;top:618px;" width="14" height="14" viewBox="0 0 14 14"><rect x="0.5" y="0.5" width="13" height="13" fill="#eee"/><path d="M1.5 1.5H12.5L7 7Z" fill="#e020e0"/><path d="M12.5 1.5V12.5L7 7Z" fill="#f0f000"/><path d="M12.5 12.5H1.5L7 7Z" fill="#111"/><path d="M1.5 12.5V1.5L7 7Z" fill="#00d0f0"/></svg><div class="a" style="left:1671px;top:660px;width:235px;height:1px;background:#3c3c3c"></div><div class="a" style="left:1707px;top:641px;width:15px;height:15px;background:#62b84a;border:2px solid #111"></div><div class="t" style="left:1726px;top:645px;font-size:10.5px;color:#c8c8c8;">C=65 M=0 Y=90 K=0</div><svg style="left:1866px;top:642px;" width="14" height="14" viewBox="0 0 14 14"><rect x="0.5" y="0.5" width="13" height="13" fill="#ddd" stroke="#eee"/><rect x="2" y="2" width="10" height="10" fill="#555"/><rect x="2" y="2" width="1" height="1" fill="#aaa"/><rect x="2" y="4" width="1" height="1" fill="#aaa"/><rect x="2" y="6" width="1" height="1" fill="#aaa"/><rect x="2" y="8" width="1" height="1" fill="#aaa"/><rect x="2" y="10" width="1" height="1" fill="#aaa"/><rect x="4" y="2" width="1" height="1" fill="#aaa"/><rect x="4" y="4" width="1" height="1" fill="#aaa"/><rect x="4" y="6" width="1" height="1" fill="#aaa"/><rect x="4" y="8" width="1" height="1" fill="#aaa"/><rect x="4" y="10" width="1" height="1" fill="#aaa"/><rect x="6" y="2" width="1" height="1" fill="#aaa"/><rect x="6" y="4" width="1" height="1" fill="#aaa"/><rect x="6" y="6" width="1" height="1" fill="#aaa"/><rect x="6" y="8" width="1" height="1" fill="#aaa"/><rect x="6" y="10" width="1" height="1" fill="#aaa"/><rect x="8" y="2" width="1" height="1" fill="#aaa"/><rect x="8" y="4" width="1" height="1" fill="#aaa"/><rect x="8" y="6" width="1" height="1" fill="#aaa"/><rect x="8" y="8" width="1" height="1" fill="#aaa"/><rect x="8" y="10" width="1" height="1" fill="#aaa"/><rect x="10" y="2" width="1" height="1" fill="#aaa"/><rect x="10" y="4" width="1" height="1" fill="#aaa"/><rect x="10" y="6" width="1" height="1" fill="#aaa"/><rect x="10" y="8" width="1" height="1" fill="#aaa"/><rect x="10" y="10" width="1" height="1" fill="#aaa"/></svg><svg style="left:1885px;top:642px;" width="14" height="14" viewBox="0 0 14 14"><rect x="0.5" y="0.5" width="13" height="13" fill="#eee"/><path d="M1.5 1.5H12.5L7 7Z" fill="#e020e0"/><path d="M12.5 1.5V12.5L7 7Z" fill="#f0f000"/><path d="M12.5 12.5H1.5L7 7Z" fill="#111"/><path d="M1.5 12.5V1.5L7 7Z" fill="#00d0f0"/></svg><div class="a" style="left:1671px;top:684px;width:235px;height:1px;background:#3c3c3c"></div><div class="a" style="left:1707px;top:665px;width:15px;height:15px;background:#e02a2e;border:2px solid #111"></div><div class="t" style="left:1726px;top:669px;font-size:10.5px;color:#c8c8c8;">C=0 M=95 Y=90 K=0</div><svg style="left:1866px;top:666px;" width="14" height="14" viewBox="0 0 14 14"><rect x="0.5" y="0.5" width="13" height="13" fill="#ddd" stroke="#eee"/><rect x="2" y="2" width="10" height="10" fill="#555"/><rect x="2" y="2" width="1" height="1" fill="#aaa"/><rect x="2" y="4" width="1" height="1" fill="#aaa"/><rect x="2" y="6" width="1" height="1" fill="#aaa"/><rect x="2" y="8" width="1" height="1" fill="#aaa"/><rect x="2" y="10" width="1" height="1" fill="#aaa"/><rect x="4" y="2" width="1" height="1" fill="#aaa"/><rect x="4" y="4" width="1" height="1" fill="#aaa"/><rect x="4" y="6" width="1" height="1" fill="#aaa"/><rect x="4" y="8" width="1" height="1" fill="#aaa"/><rect x="4" y="10" width="1" height="1" fill="#aaa"/><rect x="6" y="2" width="1" height="1" fill="#aaa"/><rect x="6" y="4" width="1" height="1" fill="#aaa"/><rect x="6" y="6" width="1" height="1" fill="#aaa"/><rect x="6" y="8" width="1" height="1" fill="#aaa"/><rect x="6" y="10" width="1" height="1" fill="#aaa"/><rect x="8" y="2" width="1" height="1" fill="#aaa"/><rect x="8" y="4" width="1" height="1" fill="#aaa"/><rect x="8" y="6" width="1" height="1" fill="#aaa"/><rect x="8" y="8" width="1" height="1" fill="#aaa"/><rect x="8" y="10" width="1" height="1" fill="#aaa"/><rect x="10" y="2" width="1" height="1" fill="#aaa"/><rect x="10" y="4" width="1" height="1" fill="#aaa"/><rect x="10" y="6" width="1" height="1" fill="#aaa"/><rect x="10" y="8" width="1" height="1" fill="#aaa"/><rect x="10" y="10" width="1" height="1" fill="#aaa"/></svg><svg style="left:1885px;top:666px;" width="14" height="14" viewBox="0 0 14 14"><rect x="0.5" y="0.5" width="13" height="13" fill="#eee"/><path d="M1.5 1.5H12.5L7 7Z" fill="#e020e0"/><path d="M12.5 1.5V12.5L7 7Z" fill="#f0f000"/><path d="M12.5 12.5H1.5L7 7Z" fill="#111"/><path d="M1.5 12.5V1.5L7 7Z" fill="#00d0f0"/></svg><div class="a" style="left:1671px;top:708px;width:235px;height:1px;background:#3c3c3c"></div><div class="a" style="left:1707px;top:689px;width:15px;height:15px;background:#e6952a;border:2px solid #111"></div><div class="t" style="left:1726px;top:693px;font-size:10.5px;color:#c8c8c8;">C=10 M=50 Y=100 K=0</div><svg style="left:1866px;top:690px;" width="14" height="14" viewBox="0 0 14 14"><rect x="0.5" y="0.5" width="13" height="13" fill="#ddd" stroke="#eee"/><rect x="2" y="2" width="10" height="10" fill="#555"/><rect x="2" y="2" width="1" height="1" fill="#aaa"/><rect x="2" y="4" width="1" height="1" fill="#aaa"/><rect x="2" y="6" width="1" height="1" fill="#aaa"/><rect x="2" y="8" width="1" height="1" fill="#aaa"/><rect x="2" y="10" width="1" height="1" fill="#aaa"/><rect x="4" y="2" width="1" height="1" fill="#aaa"/><rect x="4" y="4" width="1" height="1" fill="#aaa"/><rect x="4" y="6" width="1" height="1" fill="#aaa"/><rect x="4" y="8" width="1" height="1" fill="#aaa"/><rect x="4" y="10" width="1" height="1" fill="#aaa"/><rect x="6" y="2" width="1" height="1" fill="#aaa"/><rect x="6" y="4" width="1" height="1" fill="#aaa"/><rect x="6" y="6" width="1" height="1" fill="#aaa"/><rect x="6" y="8" width="1" height="1" fill="#aaa"/><rect x="6" y="10" width="1" height="1" fill="#aaa"/><rect x="8" y="2" width="1" height="1" fill="#aaa"/><rect x="8" y="4" width="1" height="1" fill="#aaa"/><rect x="8" y="6" width="1" height="1" fill="#aaa"/><rect x="8" y="8" width="1" height="1" fill="#aaa"/><rect x="8" y="10" width="1" height="1" fill="#aaa"/><rect x="10" y="2" width="1" height="1" fill="#aaa"/><rect x="10" y="4" width="1" height="1" fill="#aaa"/><rect x="10" y="6" width="1" height="1" fill="#aaa"/><rect x="10" y="8" width="1" height="1" fill="#aaa"/><rect x="10" y="10" width="1" height="1" fill="#aaa"/></svg><svg style="left:1885px;top:690px;" width="14" height="14" viewBox="0 0 14 14"><rect x="0.5" y="0.5" width="13" height="13" fill="#eee"/><path d="M1.5 1.5H12.5L7 7Z" fill="#e020e0"/><path d="M12.5 1.5V12.5L7 7Z" fill="#f0f000"/><path d="M12.5 12.5H1.5L7 7Z" fill="#111"/><path d="M1.5 12.5V1.5L7 7Z" fill="#00d0f0"/></svg><div class="a" style="left:1671px;top:732px;width:235px;height:1px;background:#3c3c3c"></div><div class="a" style="left:1707px;top:713px;width:15px;height:15px;background:#8c8c8c;border:2px solid #111"></div><div class="t" style="left:1726px;top:717px;font-size:10.5px;color:#c8c8c8;">C=0 M=0 Y=0 K=60</div><svg style="left:1866px;top:714px;" width="14" height="14" viewBox="0 0 14 14"><rect x="0.5" y="0.5" width="13" height="13" fill="#ddd" stroke="#eee"/><rect x="2" y="2" width="10" height="10" fill="#555"/><rect x="2" y="2" width="1" height="1" fill="#aaa"/><rect x="2" y="4" width="1" height="1" fill="#aaa"/><rect x="2" y="6" width="1" height="1" fill="#aaa"/><rect x="2" y="8" width="1" height="1" fill="#aaa"/><rect x="2" y="10" width="1" height="1" fill="#aaa"/><rect x="4" y="2" width="1" height="1" fill="#aaa"/><rect x="4" y="4" width="1" height="1" fill="#aaa"/><rect x="4" y="6" width="1" height="1" fill="#aaa"/><rect x="4" y="8" width="1" height="1" fill="#aaa"/><rect x="4" y="10" width="1" height="1" fill="#aaa"/><rect x="6" y="2" width="1" height="1" fill="#aaa"/><rect x="6" y="4" width="1" height="1" fill="#aaa"/><rect x="6" y="6" width="1" height="1" fill="#aaa"/><rect x="6" y="8" width="1" height="1" fill="#aaa"/><rect x="6" y="10" width="1" height="1" fill="#aaa"/><rect x="8" y="2" width="1" height="1" fill="#aaa"/><rect x="8" y="4" width="1" height="1" fill="#aaa"/><rect x="8" y="6" width="1" height="1" fill="#aaa"/><rect x="8" y="8" width="1" height="1" fill="#aaa"/><rect x="8" y="10" width="1" height="1" fill="#aaa"/><rect x="10" y="2" width="1" height="1" fill="#aaa"/><rect x="10" y="4" width="1" height="1" fill="#aaa"/><rect x="10" y="6" width="1" height="1" fill="#aaa"/><rect x="10" y="8" width="1" height="1" fill="#aaa"/><rect x="10" y="10" width="1" height="1" fill="#aaa"/></svg><svg style="left:1885px;top:714px;" width="14" height="14" viewBox="0 0 14 14"><rect x="0.5" y="0.5" width="13" height="13" fill="#eee"/><path d="M1.5 1.5H12.5L7 7Z" fill="#e020e0"/><path d="M12.5 1.5V12.5L7 7Z" fill="#f0f000"/><path d="M12.5 12.5H1.5L7 7Z" fill="#111"/><path d="M1.5 12.5V1.5L7 7Z" fill="#00d0f0"/></svg><div class="a" style="left:1906px;top:373px;width:14px;height:360px;background:#4a4a4a"></div><svg style="left:1908px;top:377px;" width="9" height="6" viewBox="0 0 9 6"><path d="M0 6H9L4.5 0Z" fill="#777"/></svg><svg style="left:1908px;top:721px;" width="9" height="6" viewBox="0 0 9 6"><path d="M0 0H9L4.5 6Z" fill="#777"/></svg><div class="a" style="left:1671px;top:733px;width:249px;height:24px;background:#474747;border-top:1px solid #3a3a3a"></div><svg style="left:1765px;top:739px;" width="20" height="14" viewBox="0 0 20 14"><rect x="0" y="0" width="3.5" height="3.5" fill="#ddd"/><rect x="0" y="4" width="3.5" height="3.5" fill="#ddd"/><rect x="0" y="8" width="3.5" height="3.5" fill="#ddd"/><rect x="4" y="0" width="3.5" height="3.5" fill="#ddd"/><rect x="4" y="4" width="3.5" height="3.5" fill="#ddd"/><rect x="4" y="8" width="3.5" height="3.5" fill="#ddd"/><rect x="8" y="0" width="3.5" height="3.5" fill="#ddd"/><rect x="8" y="4" width="3.5" height="3.5" fill="#111"/><rect x="8" y="8" width="3.5" height="3.5" fill="#ddd"/><path d="M14 10H18L16 12Z" fill="#ccc"/></svg><svg style="left:1803px;top:739px;" width="15" height="12" viewBox="0 0 15 12"><path d="M0 1H6L7.5 3H15V12H0Z" fill="#d0d0d0"/></svg><svg style="left:1840px;top:739px;" width="12" height="12" viewBox="0 0 12 12"><path d="M0 0H12V12H4L0 8Z" fill="#999"/><path d="M0 8H4V12" fill="#666"/></svg><svg style="left:1876px;top:738px;" width="14" height="14" viewBox="0 0 14 14"><path d="M1 2.5H13M5 2.5V1H9V2.5" stroke="#888" stroke-width="1.4" fill="none"/><path d="M2 4.5H12L11 13.5H3Z" fill="none" stroke="#888" stroke-width="1.4"/><path d="M5 6V12M7 6V12M9 6V12" stroke="#888"/></svg><div class="a" style="left:1671px;top:757px;width:249px;height:3px;background:#2a2a2a"></div><div class="a" style="left:1671px;top:760px;width:249px;height:20px;background:#383838"></div><div class="a" style="left:1672px;top:760px;width:54px;height:20px;background:#3b3b3b"></div><div class="t" style="left:1679px;top:764px;font-size:11.8px;color:#9a9a9a;font-weight:bold">Effekte</div><div class="a" style="left:1726px;top:760px;width:74px;height:20px;background:#3b3b3b"></div><div class="t" style="left:1733px;top:764px;font-size:11.8px;color:#9a9a9a;font-weight:bold">Ausrichten</div><div class="a" style="left:1800px;top:760px;width:72px;height:20px;background:#4a4a4a"></div><div class="t" style="left:1807px;top:764px;font-size:11.8px;color:#ececec;font-weight:bold">Pathfinder</div><div class="a" style="left:1671px;top:780px;width:249px;height:223px;background:#4a4a4a"></div><div class="t" style="left:1676px;top:789px;font-size:10.5px;color:#c8c8c8;">Pfade:</div><div class="t" style="left:1676px;top:837px;font-size:10.5px;color:#c8c8c8;">Pathfinder:</div><div class="t" style="left:1676px;top:885px;font-size:10.5px;color:#c8c8c8;">Form konvertieren:</div><div class="t" style="left:1676px;top:962px;font-size:10.5px;color:#c8c8c8;">Punkt konvertieren:</div><div class="a" style="left:1678px;top:829px;width:236px;height:1px;background:#5a5a5a"></div><div class="a" style="left:1678px;top:878px;width:236px;height:1px;background:#5a5a5a"></div><div class="a" style="left:1678px;top:954px;width:236px;height:1px;background:#5a5a5a"></div><svg style="left:1683px;top:805px;" width="18" height="16" viewBox="0 0 18 16"><path d="M3 13Q5 5 14 3" fill="none" stroke="#d0d0d0" stroke-dasharray="1.5 1.5" stroke-width="1.3"/><rect x="13" y="0" width="4" height="4" fill="#d0d0d0"/><rect x="1" y="12" width="4" height="4" fill="#d0d0d0"/></svg><svg style="left:1732px;top:804px;" width="22" height="18" viewBox="0 0 22 18"><ellipse cx="10" cy="11" rx="9" ry="6" fill="none" stroke="#d0d0d0" stroke-width="1.3"/><path d="M12 9L19 2M15 9L21 3" stroke="#d0d0d0" stroke-width="1.3"/></svg><svg style="left:1782px;top:804px;" width="22" height="18" viewBox="0 0 22 18"><ellipse cx="10" cy="11" rx="9" ry="6" fill="none" stroke="#d0d0d0" stroke-width="1.3"/><rect x="8" y="3" width="3.5" height="3.5" fill="#d0d0d0"/><rect x="17" y="10" width="3.5" height="3.5" fill="#d0d0d0"/></svg><svg style="left:1832px;top:804px;" width="22" height="18" viewBox="0 0 22 18"><path d="M4 3H2V16H5M18 3H20V16H15" fill="none" stroke="#d0d0d0" stroke-width="1.3"/><path d="M11 1V17" stroke="#d0d0d0"/><rect x="9.5" y="1" width="3" height="3" fill="#d0d0d0"/><rect x="9.5" y="14" width="3" height="3" fill="#d0d0d0"/><path d="M16 1L13 3L16 5M3 14L6 16L3 18" fill="#d0d0d0"/></svg><svg style="left:1683px;top:852px;" width="18" height="18" viewBox="0 0 18 18"><rect x="1" y="1" width="11" height="11" fill="#888" stroke="#d0d0d0" stroke-width="1.2"/><rect x="6" y="6" width="11" height="11" fill="#888" stroke="#d0d0d0" stroke-width="1.2"/></svg><svg style="left:1733px;top:852px;" width="18" height="18" viewBox="0 0 18 18"><rect x="1" y="1" width="11" height="11" fill="none" stroke="#d0d0d0" stroke-width="1.2"/><rect x="6" y="6" width="11" height="11" fill="#4a4a4a" stroke="#d0d0d0" stroke-width="1.2"/></svg><svg style="left:1783px;top:852px;" width="18" height="18" viewBox="0 0 18 18"><rect x="1" y="1" width="11" height="11" fill="none" stroke="#d0d0d0" stroke-width="1.2"/><rect x="6" y="6" width="11" height="11" fill="none" stroke="#d0d0d0" stroke-width="1.2"/><rect x="6" y="6" width="6" height="6" fill="#999"/></svg><svg style="left:1833px;top:852px;" width="18" height="18" viewBox="0 0 18 18"><rect x="1" y="1" width="11" height="11" fill="#999" stroke="#d0d0d0" stroke-width="1.2"/><rect x="6" y="6" width="11" height="11" fill="#999" stroke="#d0d0d0" stroke-width="1.2"/><rect x="6" y="6" width="6" height="6" fill="#4a4a4a"/></svg><svg style="left:1883px;top:852px;" width="18" height="18" viewBox="0 0 18 18"><rect x="1" y="1" width="11" height="11" fill="#4a4a4a" stroke="#d0d0d0" stroke-width="1.2"/><rect x="6" y="6" width="11" height="11" fill="#888" stroke="#d0d0d0" stroke-width="1.2"/><rect x="6" y="6" width="6" height="6" fill="#4a4a4a"/><path d="M1 1H12V6" fill="none" stroke="#333" stroke-width="1.2"/></svg><svg style="left:1683px;top:902px;" width="18" height="16" viewBox="0 0 18 16"><rect x="1.5" y="1.5" width="15" height="12" fill="none" stroke="#d0d0d0" stroke-width="1.3"/></svg><svg style="left:1733px;top:902px;" width="18" height="16" viewBox="0 0 18 16"><rect x="1.5" y="1.5" width="15" height="12" rx="3" fill="none" stroke="#d0d0d0" stroke-width="1.3"/></svg><svg style="left:1783px;top:902px;" width="20" height="16" viewBox="0 0 20 16"><path d="M5 1.5H14L18 5V11L14 14.5H5L1.5 11V5Z" fill="none" stroke="#d0d0d0" stroke-width="1.3"/></svg><svg style="left:1833px;top:902px;" width="20" height="16" viewBox="0 0 20 16"><path d="M5 1.5H14A3 3 0 0 0 18 5V11A3 3 0 0 0 14 14.5H5A3 3 0 0 0 1.5 11V5A3 3 0 0 0 5 1.5Z" fill="none" stroke="#d0d0d0" stroke-width="1.3"/></svg><svg style="left:1883px;top:903px;" width="21" height="14" viewBox="0 0 21 14"><ellipse cx="10.5" cy="7" rx="9.5" ry="6" fill="none" stroke="#d0d0d0" stroke-width="1.3"/></svg><svg style="left:1683px;top:931px;" width="18" height="16" viewBox="0 0 18 16"><path d="M9 1.5L17 14.5H1Z" fill="none" stroke="#d0d0d0" stroke-width="1.3"/></svg><svg style="left:1733px;top:931px;" width="18" height="16" viewBox="0 0 18 16"><path d="M5 1.5H13L17 8L13 14.5H5L1 8Z" fill="none" stroke="#d0d0d0" stroke-width="1.3"/></svg><svg style="left:1783px;top:931px;" width="18" height="16" viewBox="0 0 18 16"><path d="M2 15L16 1" stroke="#d0d0d0" stroke-width="1.3"/></svg><svg style="left:1833px;top:931px;" width="18" height="18" viewBox="0 0 18 18"><path d="M9 1V17M1 9H17" stroke="#d0d0d0" stroke-width="1.3"/></svg><svg style="left:1683px;top:978px;" width="18" height="18" viewBox="0 0 18 18"><rect x="1" y="1" width="5" height="5" fill="#999" stroke="#d0d0d0"/><path d="M6 3.5H16M3.5 6V17" stroke="#d0d0d0" stroke-width="1.2"/></svg><svg style="left:1732px;top:978px;" width="22" height="18" viewBox="0 0 22 18"><rect x="1" y="1" width="5" height="5" fill="#999" stroke="#d0d0d0"/><rect x="12" y="2" width="3" height="3" fill="#d0d0d0"/><path d="M6 3.5H12M15 3.5H20M3.5 6V17" stroke="#d0d0d0" stroke-width="1.2"/><rect x="2" y="12" width="3" height="3" fill="#d0d0d0"/></svg><svg style="left:1782px;top:976px;" width="22" height="20" viewBox="0 0 22 20"><rect x="1" y="1" width="3" height="3" fill="#d0d0d0"/><rect x="6" y="5" width="5" height="5" fill="#999" stroke="#d0d0d0"/><rect x="16" y="14" width="3" height="3" fill="#d0d0d0"/><path d="M3 3L8 8L17 16M9 10L13 19" stroke="#d0d0d0" stroke-width="1.1" fill="none"/></svg><svg style="left:1832px;top:976px;" width="22" height="20" viewBox="0 0 22 20"><rect x="16" y="1" width="3" height="3" fill="#d0d0d0"/><rect x="8" y="7" width="5" height="5" fill="#999" stroke="#d0d0d0"/><rect x="1" y="14" width="3" height="3" fill="#d0d0d0"/><path d="M3 15L10 10L17 3M10 12Q7 16 8 20M13 9L20 9" stroke="#d0d0d0" stroke-width="1.1" fill="none"/></svg><div class="a" style="left:1671px;top:1003px;width:249px;height:3px;background:#2a2a2a"></div><div class="a" style="left:1671px;top:1006px;width:249px;height:24px;background:#383838"></div><div class="a" style="left:1672px;top:1006px;width:113px;height:24px;background:#4a4a4a"></div><svg style="left:1677px;top:1010px;" width="7" height="12" viewBox="0 0 7 12"><path d="M0.5 4.5L3.5 1L6.5 4.5M0.5 7.5L3.5 11L6.5 7.5" fill="none" stroke="#cfcfcf" stroke-width="1.5"/></svg><div class="t" style="left:1687px;top:1010px;font-size:11.8px;color:#ececec;font-weight:bold">Zeichenformate</div><div class="a" style="left:1785px;top:1006px;width:87px;height:24px;background:#3b3b3b"></div><div class="t" style="left:1792px;top:1010px;font-size:11.8px;color:#9a9a9a;font-weight:bold">Absatzformate</div><svg style="left:1898px;top:1011px;" width="17" height="10" viewBox="0 0 17 10"><path d="M0 3H5L2.5 6Z" fill="#cfcfcf"/><path d="M6 1H17M6 4H17M6 7H17M6 9.5H17" stroke="#cfcfcf" stroke-width="1.1"/></svg><div class="a" style="left:1671px;top:1029px;width:249px;height:1px;background:#2a2a2a"></div><div class="a" style="left:41px;top:1014px;width:1356px;height:16px;background:#474747;border-top:1px solid #3a3a3a"></div><div class="a" style="left:62px;top:1017px;width:23px;height:13px;background:#5c5c5c;border-radius:2px"></div><svg style="left:64px;top:1018px;" width="20" height="12" viewBox="0 0 20 12"><circle cx="6" cy="6" r="3" fill="none" stroke="#1e1e1e" stroke-width="2.2"/><path d="M6 1V11M1 6H11M2.5 2.5L9.5 9.5M9.5 2.5L2.5 9.5" stroke="#1e1e1e" stroke-width="1.5"/><path d="M16 1V7.5M16 9V11" stroke="#1e1e1e" stroke-width="2"/></svg><svg style="left:95px;top:1016px;" width="16" height="14" viewBox="0 0 16 14"><path d="M1 5V13H12V9" fill="none" stroke="#c8c8c8" stroke-width="1.6"/><path d="M5 10Q6 4 11 4V1L15 5L11 9V6Q8 6 5 10Z" fill="#c8c8c8"/></svg><svg style="left:121px;top:1018px;" width="11" height="10" viewBox="0 0 11 10"><path d="M1 0V10" stroke="#c8c8c8" stroke-width="2"/><path d="M11 0V10L3 5Z" fill="#c8c8c8"/></svg><svg style="left:140px;top:1018px;" width="7" height="10" viewBox="0 0 7 10"><path d="M7 0V10L0 5Z" fill="#c8c8c8"/></svg><div class="t" style="left:157px;top:1018px;font-size:11px;color:#a8b8d8;">3</div><svg style="left:256px;top:1019px;" width="9" height="7" viewBox="0 0 9 7"><path d="M0 0H9L4.5 7Z" fill="#d8d8d8"/></svg><svg style="left:279px;top:1018px;" width="6" height="10" viewBox="0 0 6 10"><path d="M0 0V10L6 5Z" fill="#777"/></svg><svg style="left:293px;top:1018px;" width="11" height="10" viewBox="0 0 11 10"><path d="M0 0V10L7 5Z" fill="#777"/><path d="M10 0V10" stroke="#777" stroke-width="2"/></svg><svg style="left:313px;top:1015px;" width="17" height="15" viewBox="0 0 17 15"><circle cx="8" cy="8" r="6.5" fill="none" stroke="#d0d0d0" stroke-width="2"/><path d="M7 4V9H11" fill="none" stroke="#d0d0d0" stroke-width="1.6"/><path d="M15 13H17L16 15Z" fill="#ccc"/></svg><div class="t" style="left:344px;top:1018px;font-size:11px;color:#c0c0c0;">[Grundprofil] (Arbeitsp...</div><svg style="left:470px;top:1019px;" width="9" height="7" viewBox="0 0 9 7"><path d="M0 0H9L4.5 7Z" fill="#d8d8d8"/></svg><div class="a" style="left:487px;top:1017px;width:13px;height:13px;border-radius:50%;background:radial-gradient(circle at 40% 35%,#8ee05a,#3a9a20)"></div><div class="t" style="left:505px;top:1018px;font-size:11px;color:#c0c0c0;">Ohne Fehler</div><svg style="left:592px;top:1021px;" width="6" height="4" viewBox="0 0 6 4"><path d="M0 0H6L3 4Z" fill="#ccc"/></svg><div class="a" style="left:602px;top:1014px;width:124px;height:16px;background:#333"></div><svg style="left:610px;top:1017px;" width="6" height="10" viewBox="0 0 6 10"><path d="M6 0V10L0 5Z" fill="#d8d8d8"/></svg><div class="a" style="left:726px;top:1014px;width:671px;height:16px;background:#8f8f8f"></div><div class="a" style="left:1648px;top:100px;width:2px;height:930px;background:#282828"></div><div class="a" style="left:1650px;top:122px;width:20px;height:908px;background:#353535"></div><svg style="left:1655px;top:131px;" width="11" height="7" viewBox="0 0 11 7"><path d="M0 7H11L5.5 0Z" fill="#e0e0e0"/></svg><div class="a" style="left:1651px;top:755px;width:17px;height:138px;background:#959595"></div><svg style="left:1655px;top:1000px;" width="11" height="7" viewBox="0 0 11 7"><path d="M0 0H11L5.5 7Z" fill="#e0e0e0"/></svg><div class="a" style="left:1669px;top:100px;width:2px;height:930px;background:#232323"></div><div class="a" style="left:768px;top:40px;width:58px;height:62px;border:4px solid #ff0000"></div><div class="a" style="left:1px;top:128px;width:40px;height:37px;border:4px solid #ff0000"></div><div class="a" style="left:1669px;top:157px;width:238px;height:121px;border:4px solid #ff0000"></div><div class="a" style="left:1668px;top:418px;width:242px;height:28px;border:4px solid #ff0000"></div></body></html>
